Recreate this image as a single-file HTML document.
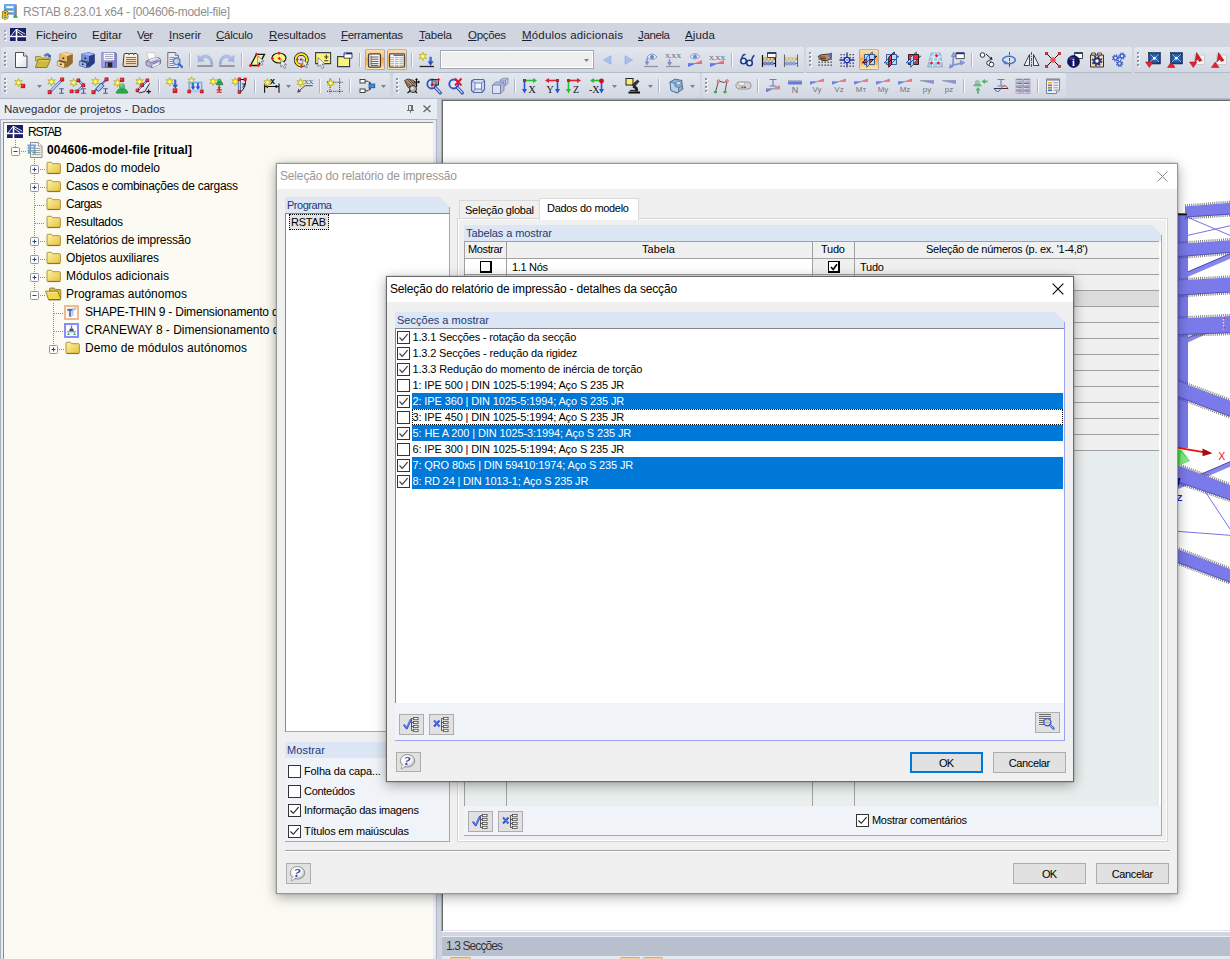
<!DOCTYPE html>
<html lang="pt"><head><meta charset="utf-8"><title>RSTAB 8.23.01 x64 - [004606-model-file]</title>
<style>
html,body{margin:0;padding:0;}
body{width:1230px;height:959px;overflow:hidden;background:#fff;font-family:"Liberation Sans",sans-serif;}
#root{position:relative;width:1230px;height:959px;overflow:hidden;background:#fff;}
.t{position:absolute;white-space:nowrap;font-family:"Liberation Sans",sans-serif;}
.btn{position:absolute;box-sizing:border-box;background:#e1e1e1;border:1px solid #adadad;}
.cb{position:absolute;box-sizing:border-box;width:13px;height:13px;border:1px solid #333;background:#fff;}
svg{position:absolute;overflow:visible;}
u{text-decoration:underline;}

</style></head>
<body>
<div id="root">
<div style="position:absolute;left:0px;top:0px;width:1230px;height:23px;background:#fff;"></div>
<span class="t" style="left:23px;top:4px;font-size:12px;line-height:17px;color:#8e8e8e;letter-spacing:-0.303px;">RSTAB 8.23.01 x64 - [004606-model-file]</span>
<div style="position:absolute;left:0px;top:23px;width:1230px;height:77px;background:#d0d5e0;"></div>
<span class="t" style="left:36px;top:26.500px;font-size:11.500px;line-height:17px;color:#1e1e2e;letter-spacing:0.013px;">Fic<u>h</u>eiro</span>
<span class="t" style="left:92px;top:26.500px;font-size:11.500px;line-height:17px;color:#1e1e2e;letter-spacing:-0.006px;">E<u>d</u>itar</span>
<span class="t" style="left:137px;top:26.500px;font-size:11.500px;line-height:17px;color:#1e1e2e;letter-spacing:-0.625px;">V<u>e</u>r</span>
<span class="t" style="left:169px;top:26.500px;font-size:11.500px;line-height:17px;color:#1e1e2e;letter-spacing:0.010px;"><u>I</u>nserir</span>
<span class="t" style="left:216px;top:26.500px;font-size:11.500px;line-height:17px;color:#1e1e2e;letter-spacing:-0.227px;"><u>C</u>álculo</span>
<span class="t" style="left:269px;top:26.500px;font-size:11.500px;line-height:17px;color:#1e1e2e;letter-spacing:-0.057px;"><u>R</u>esultados</span>
<span class="t" style="left:341px;top:26.500px;font-size:11.500px;line-height:17px;color:#1e1e2e;letter-spacing:-0.316px;"><u>F</u>erramentas</span>
<span class="t" style="left:419px;top:26.500px;font-size:11.500px;line-height:17px;color:#1e1e2e;letter-spacing:-0.175px;"><u>T</u>abela</span>
<span class="t" style="left:468px;top:26.500px;font-size:11.500px;line-height:17px;color:#1e1e2e;letter-spacing:-0.322px;"><u>O</u>pções</span>
<span class="t" style="left:522px;top:26.500px;font-size:11.500px;line-height:17px;color:#1e1e2e;letter-spacing:0.189px;"><u>M</u>ódulos adicionais</span>
<span class="t" style="left:638px;top:26.500px;font-size:11.500px;line-height:17px;color:#1e1e2e;letter-spacing:-0.375px;"><u>J</u>anela</span>
<span class="t" style="left:685px;top:26.500px;font-size:11.500px;line-height:17px;color:#1e1e2e;letter-spacing:0.148px;"><u>A</u>juda</span>
<div style="position:absolute;left:1px;top:47px;width:803px;height:25px;background:linear-gradient(#e3e7ee 0%,#dbe0e9 45%,#d2d7e2 100%);border-radius:3px 2px 1px 1px;box-shadow:0 1px 0 #b4bbc9;"></div>
<div style="position:absolute;left:1px;top:47px;width:8px;height:25px;"><div style="position:absolute;left:3px;top:5px;width:2px;height:2px;background:#8e96a8;box-shadow:1px 1px 0 #fff;"></div><div style="position:absolute;left:3px;top:9px;width:2px;height:2px;background:#8e96a8;box-shadow:1px 1px 0 #fff;"></div><div style="position:absolute;left:3px;top:13px;width:2px;height:2px;background:#8e96a8;box-shadow:1px 1px 0 #fff;"></div><div style="position:absolute;left:3px;top:17px;width:2px;height:2px;background:#8e96a8;box-shadow:1px 1px 0 #fff;"></div></div>
<div style="position:absolute;left:806px;top:47px;width:326px;height:25px;background:linear-gradient(#e3e7ee 0%,#dbe0e9 45%,#d2d7e2 100%);border-radius:3px 2px 1px 1px;box-shadow:0 1px 0 #b4bbc9;"></div>
<div style="position:absolute;left:806px;top:47px;width:8px;height:25px;"><div style="position:absolute;left:3px;top:5px;width:2px;height:2px;background:#8e96a8;box-shadow:1px 1px 0 #fff;"></div><div style="position:absolute;left:3px;top:9px;width:2px;height:2px;background:#8e96a8;box-shadow:1px 1px 0 #fff;"></div><div style="position:absolute;left:3px;top:13px;width:2px;height:2px;background:#8e96a8;box-shadow:1px 1px 0 #fff;"></div><div style="position:absolute;left:3px;top:17px;width:2px;height:2px;background:#8e96a8;box-shadow:1px 1px 0 #fff;"></div></div>
<div style="position:absolute;left:1134px;top:47px;width:100px;height:25px;background:linear-gradient(#e3e7ee 0%,#dbe0e9 45%,#d2d7e2 100%);border-radius:3px 2px 1px 1px;box-shadow:0 1px 0 #b4bbc9;"></div>
<div style="position:absolute;left:1134px;top:47px;width:8px;height:25px;"><div style="position:absolute;left:3px;top:5px;width:2px;height:2px;background:#8e96a8;box-shadow:1px 1px 0 #fff;"></div><div style="position:absolute;left:3px;top:9px;width:2px;height:2px;background:#8e96a8;box-shadow:1px 1px 0 #fff;"></div><div style="position:absolute;left:3px;top:13px;width:2px;height:2px;background:#8e96a8;box-shadow:1px 1px 0 #fff;"></div><div style="position:absolute;left:3px;top:17px;width:2px;height:2px;background:#8e96a8;box-shadow:1px 1px 0 #fff;"></div></div>
<div style="position:absolute;left:1px;top:73px;width:389px;height:25px;background:linear-gradient(#e3e7ee 0%,#dbe0e9 45%,#d2d7e2 100%);border-radius:3px 2px 1px 1px;box-shadow:0 1px 0 #b4bbc9;"></div>
<div style="position:absolute;left:1px;top:73px;width:8px;height:25px;"><div style="position:absolute;left:3px;top:5px;width:2px;height:2px;background:#8e96a8;box-shadow:1px 1px 0 #fff;"></div><div style="position:absolute;left:3px;top:9px;width:2px;height:2px;background:#8e96a8;box-shadow:1px 1px 0 #fff;"></div><div style="position:absolute;left:3px;top:13px;width:2px;height:2px;background:#8e96a8;box-shadow:1px 1px 0 #fff;"></div><div style="position:absolute;left:3px;top:17px;width:2px;height:2px;background:#8e96a8;box-shadow:1px 1px 0 #fff;"></div></div>
<div style="position:absolute;left:393px;top:73px;width:307px;height:25px;background:linear-gradient(#e3e7ee 0%,#dbe0e9 45%,#d2d7e2 100%);border-radius:3px 2px 1px 1px;box-shadow:0 1px 0 #b4bbc9;"></div>
<div style="position:absolute;left:393px;top:73px;width:8px;height:25px;"><div style="position:absolute;left:3px;top:5px;width:2px;height:2px;background:#8e96a8;box-shadow:1px 1px 0 #fff;"></div><div style="position:absolute;left:3px;top:9px;width:2px;height:2px;background:#8e96a8;box-shadow:1px 1px 0 #fff;"></div><div style="position:absolute;left:3px;top:13px;width:2px;height:2px;background:#8e96a8;box-shadow:1px 1px 0 #fff;"></div><div style="position:absolute;left:3px;top:17px;width:2px;height:2px;background:#8e96a8;box-shadow:1px 1px 0 #fff;"></div></div>
<div style="position:absolute;left:702px;top:73px;width:364px;height:25px;background:linear-gradient(#e3e7ee 0%,#dbe0e9 45%,#d2d7e2 100%);border-radius:3px 2px 1px 1px;box-shadow:0 1px 0 #b4bbc9;"></div>
<div style="position:absolute;left:702px;top:73px;width:8px;height:25px;"><div style="position:absolute;left:3px;top:5px;width:2px;height:2px;background:#8e96a8;box-shadow:1px 1px 0 #fff;"></div><div style="position:absolute;left:3px;top:9px;width:2px;height:2px;background:#8e96a8;box-shadow:1px 1px 0 #fff;"></div><div style="position:absolute;left:3px;top:13px;width:2px;height:2px;background:#8e96a8;box-shadow:1px 1px 0 #fff;"></div><div style="position:absolute;left:3px;top:17px;width:2px;height:2px;background:#8e96a8;box-shadow:1px 1px 0 #fff;"></div></div>
<svg style="left:13px;top:52px" width="16" height="16" viewBox="0 0 16 16"><defs><linearGradient id="ng1" x1="0" y1="0" x2="1" y2="1"><stop offset=".3" stop-color="#ffffff"/><stop offset="1" stop-color="#dcdcf0"/></linearGradient></defs><path d="M2.500 .500h8l3.500 3.500v11.500h-11.500z" fill="url(#ng1)" stroke="#4c4c54" stroke-width="1"/><path d="M10.500 .500v3.500h3.500" fill="#f4f4fa" stroke="#4c4c54" stroke-width=".9"/></svg>
<svg style="left:35px;top:52px" width="16" height="16" viewBox="0 0 16 16"><path d="M.500 4.500h5l1 1.500h7.500v3h-13.500z" fill="#d8c450" stroke="#8c7c20" stroke-width=".7"/><path d="M3 7.500h12.500l-3.500 8h-11.500z" fill="#cdb840" stroke="#7c6c18" stroke-width=".8"/><path d="M3.500 8.300h11l-.400 1h-11z" fill="#e8d868" opacity=".8"/><path d="M9 3.500q3.500-4 6.500 0l-1.500 1.500q-2-2.500-4-.500z" fill="#5878d0" stroke="#2c4490" stroke-width=".5"/><path d="M12.500 3.500l3.500-.500l-.500 4z" fill="#3c5cb8"/></svg>
<svg style="left:57px;top:52px" width="16" height="16" viewBox="0 0 16 16"><path d="M2.500 2l7.500-1.500l5.500 1.500v9l-5.500 4.500l-7.500-3z" fill="#e0b060" stroke="#946c30" stroke-width=".5"/><path d="M10 4l5.500-2v9l-5.500 4.500z" fill="#946c30"/><path d="M2.500 2l7.500-1.500l5.500 1.500l-5.500 2z" fill="#f8d48c"/><path d="M2.500 2.300l7.500 1.700v11.500l-7.500-3z" fill="#e8b868"/><ellipse cx="6.300" cy="6.300" rx="1" ry=".8" fill="#111"/><path d="M.300 9l2.500-1l7.200 1.700l-2.500 1.300z" fill="#3c2c10" opacity=".75"/><path d="M.300 9l7.200 2v5l-7.200-2.300z" fill="#f8d48c" stroke="#946c30" stroke-width=".5"/><path d="M7.500 11l2.500-1.300v4.800l-2.500 1.500z" fill="#946c30"/><ellipse cx="3.800" cy="12.300" rx="1" ry=".8" fill="#111"/></svg>
<svg style="left:79px;top:52px" width="16" height="16" viewBox="0 0 16 16"><path d="M2.500 2l7.500-1.500l5.500 1.500v9l-5.500 4.500l-7.500-3z" fill="#6888d8" stroke="#2c3c80" stroke-width=".5"/><path d="M10 4l5.500-2v9l-5.500 4.500z" fill="#2c3c80"/><path d="M2.500 2l7.500-1.500l5.500 1.500l-5.500 2z" fill="#98b4f4"/><path d="M2.500 2.300l7.500 1.700v11.500l-7.500-3z" fill="#7090e0"/><ellipse cx="6.300" cy="6.300" rx="1" ry=".8" fill="#111"/><path d="M.300 9l2.500-1l7.200 1.700l-2.500 1.300z" fill="#3c2c10" opacity=".75"/><path d="M.300 9l7.200 2v5l-7.200-2.300z" fill="#98b4f4" stroke="#2c3c80" stroke-width=".5"/><path d="M7.500 11l2.500-1.300v4.800l-2.500 1.500z" fill="#2c3c80"/><ellipse cx="3.800" cy="12.300" rx="1" ry=".8" fill="#111"/></svg>
<svg style="left:101px;top:52px" width="16" height="16" viewBox="0 0 16 16"><defs><linearGradient id="sg5" x1="0" y1="0" x2="1" y2="0"><stop offset="0" stop-color="#a8a8f4"/><stop offset=".5" stop-color="#8c8ce4"/><stop offset="1" stop-color="#7c7cd4"/></linearGradient></defs><path d="M.800 .500h13.700l1 1v14h-14.700z" fill="url(#sg5)" stroke="#6c6cb8" stroke-width=".7"/><rect x="2.800" y=".800" width="10.400" height="7.400" fill="#f8f8fc"/><path d="M4 2.500h8M4 4.500h8M4 6.500h8" stroke="#a0a0a8" stroke-width=".9"/><rect x="4.300" y="10.300" width="7" height="5" fill="#24242c"/><rect x="5.200" y="10.800" width="1.300" height="4.200" fill="#b8b8ec"/></svg>
<svg style="left:123px;top:52px" width="16" height="16" viewBox="0 0 16 16"><defs><linearGradient id="tg6" x1="0" y1="0" x2="0" y2="1"><stop offset="0" stop-color="#fdf4e4"/><stop offset="1" stop-color="#eccca4"/></linearGradient></defs><path d="M1 2.500q0-1 1-1h3.500v.800h1v-.800h3.500v.800h1v-.800h2q1 .200 1.800 1.200v10.800q0 1-1 1h-12.800q-1 0-1-1z" fill="url(#tg6)" stroke="#3c3c40" stroke-width="1"/><path d="M2.500 2.700h2.500M7 2.700h2.500" stroke="#fff" stroke-width="1"/><path d="M3 5.500h10M3 7.500h10M3 9.500h10M3 11.500h10" stroke="#7c746c" stroke-width="1"/></svg>
<svg style="left:145px;top:52px" width="16" height="16" viewBox="0 0 16 16"><path d="M1.500 .800l7.500-.300l2.500 6.500l-7.500 2z" fill="#fdfcf8" stroke="#b0a8a0" stroke-width=".5"/><path d="M1 9.500l3-2l7.500-2l3 .500l1 2v3.500l-8 4l-6-2.500z" fill="#c8c8e8" stroke="#54546c" stroke-width=".7"/><path d="M4 7.500l7.500-2l2 .800l-8 2.500z" fill="#e8e8f8"/><path d="M7.500 12l8-3.500" stroke="#54546c" stroke-width=".7"/><path d="M6 11l7-2.800" stroke="#7c7cb0" stroke-width="1.200"/><path d="M1 9.500q2.500-1 4 .500q1.500 2 1.500 5.500l-5-2z" fill="#b4b4dc" stroke="#54546c" stroke-width=".5"/><path d="M8 13.500l6-2.800v1.500l-6 3z" fill="#f8f8fc"/></svg>
<svg style="left:167px;top:52px" width="16" height="16" viewBox="0 0 16 16"><path d="M.800 .500h7.500l3 3v12h-10.500z" fill="#ececf0" stroke="#6c6c74" stroke-width="1"/><path d="M8.300 .500v3h3" fill="#dcdce4" stroke="#6c6c74" stroke-width=".8"/><path d="M2.500 5.500h5M2.500 7.500h4M2.500 9.500h3.500M2.500 11.500h4M2.500 13.500h5" stroke="#84848c" stroke-width=".9"/><circle cx="9.700" cy="9.300" r="3.300" fill="#c8ccd4" fill-opacity=".85" stroke="#4888e8" stroke-width="1.300"/><path d="M12.200 12l2.800 3" stroke="#3868d0" stroke-width="2.200" stroke-linecap="round"/></svg>
<div style="position:absolute;left:189px;top:53px;width:1px;height:14px;background:#aeb5c5;"></div>
<div style="position:absolute;left:190px;top:53px;width:1px;height:14px;background:#f8f9fc;"></div>
<svg style="left:197px;top:52px" width="16" height="16" viewBox="0 0 16 16"><defs><linearGradient id="ug9" x1="0" y1="0" x2="0" y2="1"><stop offset="0" stop-color="#b8c8ec"/><stop offset="1" stop-color="#8ca0d0"/></linearGradient><linearGradient id="ul9" x1="0" y1="0" x2="1" y2="0"><stop offset="0" stop-color="#54585c"/><stop offset="1" stop-color="#8c9094"/></linearGradient></defs><path d="M.800 3.200l.300 6.500l6.200-.800l-2-1.800q4-3 7 .500q1.500 2 1.500 4.900h2q0-5.500-3-8q-4.500-3.500-9.500 .500z" fill="url(#ug9)" stroke="#98a8d0" stroke-width=".4"/><path d="M.300 14h15.500" stroke="url(#ul9)" stroke-width="2"/><path d="M.300 14h15.500" stroke="#54585c" stroke-width="2" opacity=".5"/></svg>
<svg style="left:219px;top:52px" width="16" height="16" viewBox="0 0 16 16"><g transform="translate(16,0) scale(-1,1)"><defs><linearGradient id="ug10" x1="0" y1="0" x2="0" y2="1"><stop offset="0" stop-color="#b8c8ec"/><stop offset="1" stop-color="#8ca0d0"/></linearGradient><linearGradient id="ul10" x1="0" y1="0" x2="1" y2="0"><stop offset="0" stop-color="#54585c"/><stop offset="1" stop-color="#8c9094"/></linearGradient></defs><path d="M.800 3.200l.300 6.500l6.200-.800l-2-1.800q4-3 7 .500q1.500 2 1.500 4.900h2q0-5.500-3-8q-4.500-3.500-9.500 .500z" fill="url(#ug10)" stroke="#98a8d0" stroke-width=".4"/><path d="M.300 14h15.500" stroke="url(#ul10)" stroke-width="2"/><path d="M.300 14h15.500" stroke="#54585c" stroke-width="2" opacity=".5"/></g></svg>
<div style="position:absolute;left:241px;top:53px;width:1px;height:14px;background:#aeb5c5;"></div>
<div style="position:absolute;left:242px;top:53px;width:1px;height:14px;background:#f8f9fc;"></div>
<svg style="left:249px;top:52px" width="16" height="16" viewBox="0 0 16 16"><path d="M7.500 2.300h8l-6 11.200h-8z" fill="#f8f480" stroke="#111" stroke-width="1.300"/><path d="M5.8 2.3L7.5 0.5999999999999999L9.2 2.3L7.5 4.0z" fill="#f41424"/><path d="M-0.30000000000000004 13.5L1.4 11.8L3.0999999999999996 13.5L1.4 15.2z" fill="#f41424"/><path d="M7.7 13.5L9.4 11.8L11.1 13.5L9.4 15.2z" fill="#f41424"/><path d="M8.7 3.8l0 8.0l2.0 -1.8l1.6 3.3l1.6 -0.8l-1.6 -3.2l2.6 0z" fill="#f0f0f0" stroke="#555" stroke-width=".6"/></svg>
<svg style="left:271px;top:52px" width="16" height="16" viewBox="0 0 16 16"><ellipse cx="8" cy="6" rx="7" ry="5" fill="#f8f480" stroke="#111" stroke-width="1.100"/><path d="M6.3 1.3L8 -0.3999999999999999L9.7 1.3L8 3.0z" fill="#f41424"/><path d="M-0.19999999999999996 6.4L1.5 4.7L3.2 6.4L1.5 8.1z" fill="#f41424"/><path d="M6.6000000000000005 6.4L8.3 4.7L10.0 6.4L8.3 8.1z" fill="#f41424"/><path d="M9.8 7.5l0 7.6l1.9 -1.71l1.52 3.135l1.52 -0.76l-1.52 -3.04l2.4699999999999998 0z" fill="#f0f0f0" stroke="#555" stroke-width=".6"/></svg>
<svg style="left:294px;top:52px" width="16" height="16" viewBox="0 0 16 16"><circle cx="7.300" cy="7.700" r="5.700" fill="none" stroke="#111" stroke-width="3.400"/><circle cx="7.300" cy="7.700" r="5.700" fill="none" stroke="#f8ec18" stroke-width="2"/><path d="M1.7999999999999998 7.6L3.3 6.1L4.8 7.6L3.3 9.1z" fill="#f41424"/><path d="M5.5 7.6L7 6.1L8.5 7.6L7 9.1z" fill="#f41424"/><path d="M5.6 14.5L7.3 12.8L9.0 14.5L7.3 16.2z" fill="#f41424"/><path d="M8.8 7.5l0 7.2l1.8 -1.62l1.4400000000000002 2.9699999999999998l1.4400000000000002 -0.7200000000000001l-1.4400000000000002 -2.8800000000000003l2.3400000000000003 0z" fill="#f0f0f0" stroke="#555" stroke-width=".6"/></svg>
<svg style="left:315px;top:52px" width="16" height="16" viewBox="0 0 16 16"><path d="M.600 .600h15v11h-15z" fill="#f8f480" stroke="#3c3c44" stroke-width="1.100"/><path d="M9.200 5h4.200M11.300 2.800v4.400M9.200 8.800h4.200" stroke="#3c3c2c" stroke-width="1.100"/><path d="M3 5.6l0 9.2l2.3 -2.07l1.8399999999999999 3.7949999999999995l1.8399999999999999 -0.9199999999999999l-1.8399999999999999 -3.6799999999999997l2.9899999999999998 0z" fill="#f4f4f4" stroke="#555" stroke-width=".6"/></svg>
<svg style="left:337px;top:52px" width="16" height="16" viewBox="0 0 16 16"><path d="M.600 4.600h12v10h-12z" fill="#f8f480" stroke="#3c3c44" stroke-width="1.100"/><path d="M7 1h8v5.200h-8z" fill="#fff" stroke="#3c3c44" stroke-width=".9"/><path d="M7 1.500h8" stroke="#182c88" stroke-width="1.700"/><path d="M7.500 1.300h1.500" stroke="#fff" stroke-width=".8"/></svg>
<div style="position:absolute;left:359px;top:53px;width:1px;height:14px;background:#aeb5c5;"></div>
<div style="position:absolute;left:360px;top:53px;width:1px;height:14px;background:#f8f9fc;"></div>
<div style="position:absolute;left:365px;top:49px;width:20px;height:21px;box-sizing:border-box;border:1px solid #b0a8a0;border-top-color:#d8b078;border-radius:2px;background:linear-gradient(#fbdcae 0%,#fbc377 38%,#f9a636 42%,#fbc368 75%,#fdeab8 100%);"></div>
<div style="position:absolute;left:387px;top:49px;width:20px;height:21px;box-sizing:border-box;border:1px solid #b0a8a0;border-top-color:#d8b078;border-radius:2px;background:linear-gradient(#fbdcae 0%,#fbc377 38%,#f9a636 42%,#fbc368 75%,#fdeab8 100%);"></div>
<svg style="left:366.5px;top:52px" width="16" height="16" viewBox="0 0 16 16"><rect x="1.600" y="1.800" width="11.800" height="13.400" rx="1.200" fill="#fdfdfd" stroke="#4c3c2c" stroke-width="1.300"/><path d="M4 5h7.500M4 7.200h7.500M4 9.400h7.500M4 11.600h7.500M4 13.400h7.500" stroke="#5c5c64" stroke-width="1"/><path d="M4 3.500v10" stroke="#5c5c64" stroke-width="1"/></svg>
<svg style="left:389px;top:52px" width="16" height="16" viewBox="0 0 16 16"><rect x=".600" y="1.800" width="14.800" height="13.400" rx=".8" fill="#fdfdfd" stroke="#5c4830" stroke-width="1.300"/><path d="M4.500 3.300h10" stroke="#4c6cc0" stroke-width="1.500"/><path d="M1.500 5.600h13M1.500 7.600h13M1.500 9.600h13M1.500 11.600h13M1.500 13.600h13" stroke="#b8b8b8" stroke-width="1.100"/><path d="M5.500 4.500v10.500M10 4.500v10.500" stroke="#fdfdfd" stroke-width=".8"/></svg>
<div style="position:absolute;left:411px;top:53px;width:1px;height:14px;background:#aeb5c5;"></div>
<div style="position:absolute;left:412px;top:53px;width:1px;height:14px;background:#f8f9fc;"></div>
<svg style="left:419px;top:52px" width="16" height="16" viewBox="0 0 16 16"><path d="M3.8 0.1 L4.8 2.7 L7.5 2.2 L5.8 4.4 L7.5 6.5 L4.8 6.1 L3.8 8.7 L2.8 6.1 L0.1 6.6 L1.8 4.4 L0.1 2.2 L2.8 2.7z" fill="#f6ee2c" stroke="#9c9414" stroke-width=".55" stroke-linejoin="round"/><circle cx="3.8" cy="4.4" r="1.20" fill="#fffde0" opacity=".85"/><path d="M11.600 4.800v6" stroke="#3c6cd8" stroke-width="2.400"/><path d="M8.600 9.300l3 4.600l3-4.600z" fill="#2c58c0"/><path d="M.600 14.500h14.400" stroke="#23252c" stroke-width="1.300"/></svg>
<div style="position:absolute;left:440px;top:50px;width:154px;height:19px;box-sizing:border-box;border:1px solid #a4a8b4;background:#efefef;box-shadow:inset 0 0 0 1px #fff;"></div>
<svg style="left:583.5px;top:59px" width="5" height="3" viewBox="0 0 5 3"><path d="M0 0h5l-2.500 3z" fill="#7c8088"/></svg>
<svg style="left:599px;top:52px" width="16" height="16" viewBox="0 0 16 16"><path d="M12 3.700v8.600l-7.500-4.300z" fill="#a8c0f0" stroke="#88a4e0" stroke-width=".6"/></svg>
<svg style="left:621px;top:52px" width="16" height="16" viewBox="0 0 16 16"><path d="M4 3.700v8.600l7.500-4.300z" fill="#a8c0f0" stroke="#88a4e0" stroke-width=".6"/></svg>
<svg style="left:643px;top:52px" width="16" height="16" viewBox="0 0 16 16"><path d="M4 5q5-6 10 0q-5 5-10 0z" fill="#e8eefc" stroke="#7c90c4" stroke-width=".9"/><circle cx="9" cy="5" r="2" fill="#6c88d0"/><path d="M4 6v6" stroke="#7c90c4" stroke-width="1.500"/><path d="M1.500 9.500l2.500 4l2.500-4z" fill="#7c90c4"/><path d="M1 14.500h14" stroke="#8c94a8" stroke-width="1.200"/></svg>
<svg style="left:665px;top:52px" width="16" height="16" viewBox="0 0 16 16"><text x="8" y="5.5" text-anchor="middle" font-family="Liberation Serif,serif" font-size="7" fill="#5c6070" letter-spacing="-.2">X.XX</text><path d="M4.500 7v5" stroke="#7c90c4" stroke-width="1.400"/><path d="M2 10l2.500 4l2.500-4z" fill="#7c90c4"/><path d="M1 14.500h14" stroke="#8c94a8" stroke-width="1.200"/></svg>
<svg style="left:687px;top:52px" width="16" height="16" viewBox="0 0 16 16"><path d="M3 4.5q5-6 10 0q-5 5-10 0z" fill="#e8eefc" stroke="#7c90c4" stroke-width=".9"/><circle cx="8" cy="4.5" r="2" fill="#6c88d0"/><path d="M1 11.5h14" stroke="#8a8a98" stroke-width="1"/><path d="M8 11.0L15 11.0L15 8.0z" fill="#ee7480"/><path d="M8 12.0L1 12.0L1 15.0z" fill="#6474e8"/></svg>
<svg style="left:709px;top:52px" width="16" height="16" viewBox="0 0 16 16"><text x="8" y="7.5" text-anchor="middle" font-family="Liberation Serif,serif" font-size="7" fill="#5c6070" letter-spacing="-.2">X.XX</text><path d="M1 11.5h14" stroke="#8a8a98" stroke-width="1"/><path d="M8 11.0L15 11.0L15 8.0z" fill="#ee7480"/><path d="M8 12.0L1 12.0L1 15.0z" fill="#6474e8"/></svg>
<div style="position:absolute;left:731px;top:53px;width:1px;height:14px;background:#aeb5c5;"></div>
<div style="position:absolute;left:732px;top:53px;width:1px;height:14px;background:#f8f9fc;"></div>
<svg style="left:739px;top:52px" width="16" height="16" viewBox="0 0 16 16"><circle cx="4.500" cy="9" r="2.800" fill="#e4ecfc" stroke="#203c8c" stroke-width="1.600"/><circle cx="10.500" cy="11" r="2.800" fill="#e4ecfc" stroke="#203c8c" stroke-width="1.600"/><path d="M7 9.500q1-.8 1.500.5M2.500 7q1-5 4-4.500M12.500 9q1-5 3-5.500" fill="none" stroke="#203c8c" stroke-width="1.400"/></svg>
<svg style="left:761px;top:52px" width="16" height="16" viewBox="0 0 16 16"><g opacity="1.0"><path d="M1.500 3v12M14.500 3v12M1.500 7h13M1.500 11.500h13" stroke="#111" stroke-width="1.200" fill="none"/><circle cx="4" cy="7" r="1.700" fill="#e8d470" stroke="#8c7c20" stroke-width=".4"/><circle cx="7.5" cy="7" r="1.700" fill="#e8d470" stroke="#8c7c20" stroke-width=".4"/><circle cx="11" cy="7" r="1.700" fill="#e8d470" stroke="#8c7c20" stroke-width=".4"/><circle cx="4" cy="11.500" r="1.700" fill="#7c94ec" stroke="#2c3c90" stroke-width=".4"/><circle cx="7.5" cy="11.500" r="1.700" fill="#7c94ec" stroke="#2c3c90" stroke-width=".4"/><circle cx="11" cy="11.500" r="1.700" fill="#7c94ec" stroke="#2c3c90" stroke-width=".4"/></g><path d="M6.500 .500h8.500v5h-8.500z" fill="#fff" stroke="#333" stroke-width=".9"/><path d="M6.500 1.200h8.500" stroke="#203890" stroke-width="1.500"/></svg>
<svg style="left:783px;top:52px" width="16" height="16" viewBox="0 0 16 16"><g opacity=".9"><path d="M1.500 2.500v12.500M14.500 2.500v12.500M1.500 7h13M1.500 11.500h13" stroke="#5c5c64" stroke-width="1.100" fill="none"/><circle cx="4" cy="7" r="1.700" fill="#e8dc90" stroke="#a89c50" stroke-width=".4"/><circle cx="7.5" cy="7" r="1.700" fill="#e8dc90" stroke="#a89c50" stroke-width=".4"/><circle cx="11" cy="7" r="1.700" fill="#e8dc90" stroke="#a89c50" stroke-width=".4"/><circle cx="4" cy="11.500" r="1.700" fill="#90a4f0" stroke="#5064b0" stroke-width=".4"/><circle cx="7.5" cy="11.500" r="1.700" fill="#90a4f0" stroke="#5064b0" stroke-width=".4"/><circle cx="11" cy="11.500" r="1.700" fill="#90a4f0" stroke="#5064b0" stroke-width=".4"/></g></svg>
<div style="position:absolute;left:859px;top:49px;width:20px;height:21px;box-sizing:border-box;border:1px solid #b0a8a0;border-top-color:#d8b078;border-radius:2px;background:linear-gradient(#fbdcae 0%,#fbc377 38%,#f9a636 42%,#fbc368 75%,#fdeab8 100%);"></div>
<svg style="left:817px;top:52px" width="16" height="16" viewBox="0 0 16 16"><rect x="1.5" y="6.5" width="1.300" height="1.300" fill="#333"/><rect x="1.5" y="9.5" width="1.300" height="1.300" fill="#333"/><rect x="1.5" y="12.5" width="1.300" height="1.300" fill="#333"/><rect x="4.5" y="6.5" width="1.300" height="1.300" fill="#333"/><rect x="4.5" y="9.5" width="1.300" height="1.300" fill="#333"/><rect x="4.5" y="12.5" width="1.300" height="1.300" fill="#333"/><rect x="7.5" y="6.5" width="1.300" height="1.300" fill="#333"/><rect x="7.5" y="9.5" width="1.300" height="1.300" fill="#333"/><rect x="7.5" y="12.5" width="1.300" height="1.300" fill="#333"/><rect x="10.5" y="6.5" width="1.300" height="1.300" fill="#333"/><rect x="10.5" y="9.5" width="1.300" height="1.300" fill="#333"/><rect x="10.5" y="12.5" width="1.300" height="1.300" fill="#333"/><rect x="13.5" y="6.5" width="1.300" height="1.300" fill="#333"/><rect x="13.5" y="9.5" width="1.300" height="1.300" fill="#333"/><rect x="13.5" y="12.5" width="1.300" height="1.300" fill="#333"/><path d="M1 4.500q3-2.500 6-2l5-.500l2 1v3.500l-4 2q-4 .5-5.500-.5l-1.500-1.500z" fill="#b88c68" stroke="#2c1c10" stroke-width=".8"/><path d="M12 1.500l3-1v5l-2 1z" fill="#4468c8"/><path d="M2.500 5h6M3 6.500h6M4 8h4" stroke="#3c2818" stroke-width=".7"/></svg>
<svg style="left:839px;top:52px" width="16" height="16" viewBox="0 0 16 16"><rect x="1.5" y="2" width="1.300" height="1.300" fill="#333"/><rect x="1.5" y="5" width="1.300" height="1.300" fill="#333"/><rect x="1.5" y="10.5" width="1.300" height="1.300" fill="#333"/><rect x="1.5" y="13.5" width="1.300" height="1.300" fill="#333"/><rect x="4.5" y="2" width="1.300" height="1.300" fill="#333"/><rect x="4.5" y="5" width="1.300" height="1.300" fill="#333"/><rect x="4.5" y="10.5" width="1.300" height="1.300" fill="#333"/><rect x="4.5" y="13.5" width="1.300" height="1.300" fill="#333"/><rect x="10.5" y="2" width="1.300" height="1.300" fill="#333"/><rect x="10.5" y="5" width="1.300" height="1.300" fill="#333"/><rect x="10.5" y="10.5" width="1.300" height="1.300" fill="#333"/><rect x="10.5" y="13.5" width="1.300" height="1.300" fill="#333"/><rect x="13.5" y="2" width="1.300" height="1.300" fill="#333"/><rect x="13.5" y="5" width="1.300" height="1.300" fill="#333"/><rect x="13.5" y="10.5" width="1.300" height="1.300" fill="#333"/><rect x="13.5" y="13.5" width="1.300" height="1.300" fill="#333"/><path d="M8 .500v15M.500 8h15" stroke="#1828b8" stroke-width="1.300"/><circle cx="8" cy="8" r="2.600" fill="#fff" stroke="#1828b8" stroke-width="1.300"/><circle cx="8" cy="8" r=".8" fill="#1828b8"/></svg>
<svg style="left:861px;top:52px" width="16" height="16" viewBox="0 0 16 16"><path d="M8.5 7.5L11.3 4.7L11.3 9.7L8.5 12.5z" fill="#b4d8f8" stroke="#1c4c9c" stroke-width=".85" stroke-linejoin="round"/><path d="M8.5 7.5L12.5 7.5L15.8 4.2L11.8 4.2z" fill="#f42c34" stroke="#180808" stroke-width=".85" stroke-linejoin="round"/><path d="M4.5 7.5L8.5 7.5L11.8 4.2L7.8 4.2z" fill="#f42c34" stroke="#180808" stroke-width=".85" stroke-linejoin="round"/><path d="M8.5 7.5L11.3 4.7L11.3 0L8.5 2.5z" fill="#b4d8f8" stroke="#1c4c9c" stroke-width=".85" stroke-linejoin="round"/><path d="M8.5 7.5L13.5 7.5L13.5 2.5L8.5 2.5z" fill="#b4d8f8" stroke="#1c4c9c" stroke-width=".85" stroke-linejoin="round"/><path d="M3.5 7.5L8.5 7.5L8.5 2.5L3.5 2.5z" fill="#b4d8f8" stroke="#1c4c9c" stroke-width=".85" stroke-linejoin="round"/><path d="M3.5 7.5L8.5 7.5L8.5 12.5L3.5 12.5z" fill="#b4d8f8" stroke="#1c4c9c" stroke-width=".85" stroke-linejoin="round"/><path d="M8.5 7.5L13.5 7.5L13.5 12.5L8.5 12.5z" fill="#b4d8f8" stroke="#1c4c9c" stroke-width=".85" stroke-linejoin="round"/><path d="M8.5 7.5L12.5 7.5L9.2 10.8L5.2 10.8z" fill="#f42c34" stroke="#180808" stroke-width=".85" stroke-linejoin="round"/><path d="M8.5 7.5L5.7 10.3L5.7 15.3L8.5 12.5z" fill="#b4d8f8" stroke="#1c4c9c" stroke-width=".85" stroke-linejoin="round"/><path d="M4.5 7.5L8.5 7.5L5.2 10.8L1.2 10.8z" fill="#f42c34" stroke="#180808" stroke-width=".85" stroke-linejoin="round"/><path d="M8.5 7.5L5.7 10.3L5.7 5.3L8.5 2.5z" fill="#b4d8f8" stroke="#1c4c9c" stroke-width=".85" stroke-linejoin="round"/></svg>
<svg style="left:883px;top:52px" width="16" height="16" viewBox="0 0 16 16"><path d="M8.5 7.5L11.3 4.7L11.3 9.7L8.5 12.5z" fill="#f42c34" stroke="#180808" stroke-width=".85" stroke-linejoin="round"/><path d="M8.5 7.5L12.5 7.5L15.8 4.2L11.8 4.2z" fill="#b4d8f8" stroke="#1c4c9c" stroke-width=".85" stroke-linejoin="round"/><path d="M4.5 7.5L8.5 7.5L11.8 4.2L7.8 4.2z" fill="#b4d8f8" stroke="#1c4c9c" stroke-width=".85" stroke-linejoin="round"/><path d="M8.5 7.5L11.3 4.7L11.3 0L8.5 2.5z" fill="#f42c34" stroke="#180808" stroke-width=".85" stroke-linejoin="round"/><path d="M8.5 7.5L13.5 7.5L13.5 2.5L8.5 2.5z" fill="#b4d8f8" stroke="#1c4c9c" stroke-width=".85" stroke-linejoin="round"/><path d="M3.5 7.5L8.5 7.5L8.5 2.5L3.5 2.5z" fill="#b4d8f8" stroke="#1c4c9c" stroke-width=".85" stroke-linejoin="round"/><path d="M3.5 7.5L8.5 7.5L8.5 12.5L3.5 12.5z" fill="#b4d8f8" stroke="#1c4c9c" stroke-width=".85" stroke-linejoin="round"/><path d="M8.5 7.5L13.5 7.5L13.5 12.5L8.5 12.5z" fill="#b4d8f8" stroke="#1c4c9c" stroke-width=".85" stroke-linejoin="round"/><path d="M8.5 7.5L12.5 7.5L9.2 10.8L5.2 10.8z" fill="#b4d8f8" stroke="#1c4c9c" stroke-width=".85" stroke-linejoin="round"/><path d="M8.5 7.5L5.7 10.3L5.7 15.3L8.5 12.5z" fill="#f42c34" stroke="#180808" stroke-width=".85" stroke-linejoin="round"/><path d="M4.5 7.5L8.5 7.5L5.2 10.8L1.2 10.8z" fill="#b4d8f8" stroke="#1c4c9c" stroke-width=".85" stroke-linejoin="round"/><path d="M8.5 7.5L5.7 10.3L5.7 5.3L8.5 2.5z" fill="#f42c34" stroke="#180808" stroke-width=".85" stroke-linejoin="round"/></svg>
<svg style="left:905px;top:52px" width="16" height="16" viewBox="0 0 16 16"><path d="M8.5 7.5L11.3 4.7L11.3 9.7L8.5 12.5z" fill="#b4d8f8" stroke="#1c4c9c" stroke-width=".85" stroke-linejoin="round"/><path d="M8.5 7.5L12.5 7.5L15.8 4.2L11.8 4.2z" fill="#b4d8f8" stroke="#1c4c9c" stroke-width=".85" stroke-linejoin="round"/><path d="M4.5 7.5L8.5 7.5L11.8 4.2L7.8 4.2z" fill="#b4d8f8" stroke="#1c4c9c" stroke-width=".85" stroke-linejoin="round"/><path d="M8.5 7.5L11.3 4.7L11.3 0L8.5 2.5z" fill="#b4d8f8" stroke="#1c4c9c" stroke-width=".85" stroke-linejoin="round"/><path d="M8.5 7.5L13.5 7.5L13.5 2.5L8.5 2.5z" fill="#f42c34" stroke="#180808" stroke-width=".85" stroke-linejoin="round"/><path d="M3.5 7.5L8.5 7.5L8.5 2.5L3.5 2.5z" fill="#f42c34" stroke="#180808" stroke-width=".85" stroke-linejoin="round"/><path d="M3.5 7.5L8.5 7.5L8.5 12.5L3.5 12.5z" fill="#f42c34" stroke="#180808" stroke-width=".85" stroke-linejoin="round"/><path d="M8.5 7.5L13.5 7.5L13.5 12.5L8.5 12.5z" fill="#f42c34" stroke="#180808" stroke-width=".85" stroke-linejoin="round"/><path d="M8.5 7.5L12.5 7.5L9.2 10.8L5.2 10.8z" fill="#b4d8f8" stroke="#1c4c9c" stroke-width=".85" stroke-linejoin="round"/><path d="M8.5 7.5L5.7 10.3L5.7 15.3L8.5 12.5z" fill="#b4d8f8" stroke="#1c4c9c" stroke-width=".85" stroke-linejoin="round"/><path d="M4.5 7.5L8.5 7.5L5.2 10.8L1.2 10.8z" fill="#b4d8f8" stroke="#1c4c9c" stroke-width=".85" stroke-linejoin="round"/><path d="M8.5 7.5L5.7 10.3L5.7 5.3L8.5 2.5z" fill="#b4d8f8" stroke="#1c4c9c" stroke-width=".85" stroke-linejoin="round"/></svg>
<svg style="left:927px;top:52px" width="16" height="16" viewBox="0 0 16 16"><path d="M4 1h9.500l2 14h-15z" fill="#a4d0ec" stroke="#7c98b0" stroke-width=".6"/><path d="M3.200 5h11M2 9.500h13M7.200 1l-1.700 14M10.500 1l.700 14" stroke="#e8f4fc" stroke-width=".9"/><path d="M7.8 3.7L9.6 1.9000000000000001L11.4 3.7L9.6 5.5z" fill="#f41424"/><path d="M2.7 11L4.5 9.2L6.3 11L4.5 12.8z" fill="#f41424"/><path d="M9.5 11L11.3 9.2L13.100000000000001 11L11.3 12.8z" fill="#f41424"/></svg>
<svg style="left:949px;top:52px" width="16" height="16" viewBox="0 0 16 16"><path d="M3.800 13.200l.800-10M3.800 13.200l9-2M3.800 13.200l-2.300 1.800" fill="none" stroke="#7c98d4" stroke-width="1.800"/><path d="M4.700 0l-2.500 4.500h4.500zM15.800 10.500l-4.500-2l.800 4.500zM.300 16l1-3.500l2.500 2.500z" fill="#8ca8e0" stroke="#4c68a8" stroke-width=".5"/><path d="M7 .800h8.300v5.800h-8.300z" fill="#fff" stroke="#3c3c44" stroke-width=".9"/><path d="M7 1.400h8.300" stroke="#182c88" stroke-width="1.600"/></svg>
<div style="position:absolute;left:971px;top:53px;width:1px;height:14px;background:#aeb5c5;"></div>
<div style="position:absolute;left:972px;top:53px;width:1px;height:14px;background:#f8f9fc;"></div>
<svg style="left:979px;top:52px" width="16" height="16" viewBox="0 0 16 16"><circle cx="3.500" cy="3" r="2.300" fill="#fff" stroke="#222" stroke-width=".9"/><circle cx="10" cy="11" r="2.300" fill="#fff" stroke="#222" stroke-width=".9"/><circle cx="12.500" cy="12.500" r="2.300" fill="#fff" stroke="#222" stroke-width=".9"/><path d="M7 2l5.500 5" stroke="#222" stroke-width="1"/><path d="M13.500 8l-3.500-.800l2.800-2.400z" fill="#222"/></svg>
<svg style="left:1001px;top:52px" width="16" height="16" viewBox="0 0 16 16"><ellipse cx="8" cy="8" rx="6.300" ry="3.800" fill="none" stroke="#4878d0" stroke-width="1.600"/><path d="M3 12.500l.500-4l3.500 2.500z" fill="#4878d0"/><path d="M8.500 0v16" stroke="#ee1020" stroke-width="1" stroke-dasharray="3 1 1 1"/></svg>
<svg style="left:1023px;top:52px" width="16" height="16" viewBox="0 0 16 16"><path d="M6.500 2.500v11h-5.500zM10.500 2.500v11h5.500z" fill="#f0f0f4" stroke="#2c2c34" stroke-width=".9"/><path d="M8.500 0v16" stroke="#ee1020" stroke-width="1" stroke-dasharray="3 1 1 1"/></svg>
<svg style="left:1045px;top:52px" width="16" height="16" viewBox="0 0 16 16"><path d="M1.500 1.500l13 13M14.500 1.500l-13 13" stroke="#111" stroke-width="1"/><circle cx="8" cy="8" r="2.200" fill="#f8b0b4" stroke="#e01020" stroke-width=".9"/><circle cx="8" cy="8" r=".9" fill="#e01020"/><rect x="0.40000000000000013" y="0.40000000000000013" width="2.4" height="2.4" fill="#ec1420" stroke="#98080c" stroke-width=".5"/><rect x="0.8000000000000002" y="0.8000000000000002" width="1.08" height="1.08" fill="#ff6868" opacity=".7"/><rect x="13.200000000000001" y="0.40000000000000013" width="2.4" height="2.4" fill="#ec1420" stroke="#98080c" stroke-width=".5"/><rect x="13.600000000000001" y="0.8000000000000002" width="1.08" height="1.08" fill="#ff6868" opacity=".7"/><rect x="0.40000000000000013" y="13.200000000000001" width="2.4" height="2.4" fill="#ec1420" stroke="#98080c" stroke-width=".5"/><rect x="0.8000000000000002" y="13.600000000000001" width="1.08" height="1.08" fill="#ff6868" opacity=".7"/><rect x="13.200000000000001" y="13.200000000000001" width="2.4" height="2.4" fill="#ec1420" stroke="#98080c" stroke-width=".5"/><rect x="13.600000000000001" y="13.600000000000001" width="1.08" height="1.08" fill="#ff6868" opacity=".7"/></svg>
<svg style="left:1067px;top:52px" width="16" height="16" viewBox="0 0 16 16"><path d="M7.500 .500h8v6h-8z" fill="#fff" stroke="#333" stroke-width=".9"/><path d="M7.500 1.200h8" stroke="#203890" stroke-width="1.500"/><circle cx="6.500" cy="9.500" r="6" fill="#101460" stroke="#000030" stroke-width=".6"/><ellipse cx="5" cy="6.500" rx="3" ry="1.800" fill="#5058b0" opacity=".6"/><text x="6.500" y="13.500" text-anchor="middle" font-family="Liberation Serif,serif" font-weight="bold" font-size="10" fill="#fff">i</text></svg>
<svg style="left:1089px;top:52px" width="16" height="16" viewBox="0 0 16 16"><path d="M1.500 3h13v12h-13z" fill="#f0d8b8" stroke="#3c342c" stroke-width="1"/><path d="M2.500 1h4v2h-4zM8.500 1h4v2h-4z" fill="#f0d8b8" stroke="#3c342c" stroke-width=".8"/><circle cx="8" cy="9" r="4.3" fill="none" stroke="#24347c" stroke-width="2" stroke-dasharray="1.7 1.7"/><circle cx="8" cy="9" r="2.8" fill="none" stroke="#24347c" stroke-width="2"/><circle cx="8" cy="9" r="1.200" fill="#f8f8ff"/></svg>
<svg style="left:1111px;top:52px" width="16" height="16" viewBox="0 0 16 16"><circle cx="4.5" cy="6" r="2.9" fill="none" stroke="#4060c8" stroke-width="1.6" stroke-dasharray="1.15 1.15"/><circle cx="4.5" cy="6" r="1.9" fill="none" stroke="#4060c8" stroke-width="1.3"/><circle cx="11" cy="4" r="2.9" fill="none" stroke="#4060c8" stroke-width="1.6" stroke-dasharray="1.15 1.15"/><circle cx="11" cy="4" r="1.9" fill="none" stroke="#4060c8" stroke-width="1.3"/><circle cx="8.5" cy="11.5" r="2.9" fill="none" stroke="#4060c8" stroke-width="1.6" stroke-dasharray="1.15 1.15"/><circle cx="8.5" cy="11.5" r="1.9" fill="none" stroke="#4060c8" stroke-width="1.3"/></svg>
<svg style="left:1145px;top:52px" width="16" height="16" viewBox="0 0 16 16"><defs><radialGradient id="dxg42" cx=".5" cy=".5" r=".7"><stop offset="0" stop-color="#3c84c8"/><stop offset="1" stop-color="#082870"/></radialGradient></defs><rect x="3.500" y=".500" width="12" height="11.500" fill="url(#dxg42)" stroke="#04184c" stroke-width=".5"/><path d="M5 2l4 4l-4 4M14 2l-4 4l4 4" fill="none" stroke="#9cc8f0" stroke-width="1" opacity=".9"/><rect x="8" y="5" width="2.500" height="2.500" fill="#fff"/><path d="M.500 10h7.500l-3.750 5.500z" fill="#e82030" stroke="#a01018" stroke-width=".5"/></svg>
<svg style="left:1167px;top:52px" width="16" height="16" viewBox="0 0 16 16"><defs><radialGradient id="dxg43" cx=".5" cy=".5" r=".7"><stop offset="0" stop-color="#3c84c8"/><stop offset="1" stop-color="#082870"/></radialGradient></defs><rect x="3.500" y=".500" width="12" height="11.500" fill="url(#dxg43)" stroke="#04184c" stroke-width=".5"/><path d="M5 2l4 4l-4 4M14 2l-4 4l4 4" fill="none" stroke="#9cc8f0" stroke-width="1" opacity=".9"/><rect x="8" y="5" width="2.500" height="2.500" fill="#fff"/><path d="M.500 15.500h7.500l-3.750-5.500z" fill="#e82030" stroke="#a01018" stroke-width=".5"/></svg>
<svg style="left:1189px;top:52px" width="16" height="16" viewBox="0 0 16 16"><rect x="5.500" y="3" width="10" height="9.500" fill="#f4f4f4" stroke="#c0c0c8" stroke-width=".7"/><path d="M7.500 .500l5.500 8l-3 1l-1-2.500l-3 3z" fill="#d81828" stroke="#8c0c14" stroke-width=".5"/><path d="M.500 10h7.500l-3.750 5.500z" fill="#e82030" stroke="#a01018" stroke-width=".5"/></svg>
<svg style="left:1211px;top:52px" width="16" height="16" viewBox="0 0 16 16"><rect x="5.500" y="3" width="10" height="9.500" fill="#f4f4f4" stroke="#c0c0c8" stroke-width=".7"/><path d="M7.500 .500l5.500 8l-3 1l-1-2.500l-3 3z" fill="#d81828" stroke="#8c0c14" stroke-width=".5"/><path d="M.500 15.500h7.500l-3.750-5.500z" fill="#e82030" stroke="#a01018" stroke-width=".5"/></svg>
<svg style="left:13px;top:78px" width="16" height="16" viewBox="0 0 16 16"><path d="M5.6 0.3 L6.6 2.9 L9.3 2.4 L7.6 4.6 L9.3 6.7 L6.6 6.3 L5.6 8.9 L4.6 6.3 L1.9 6.8 L3.6 4.6 L1.9 2.4 L4.6 2.9z" fill="#f6ee2c" stroke="#9c9414" stroke-width=".55" stroke-linejoin="round"/><circle cx="5.6" cy="4.6" r="1.20" fill="#fffde0" opacity=".85"/><rect x="8.1" y="6.1" width="3.8" height="3.8" fill="#ec1420" stroke="#98080c" stroke-width=".5"/><rect x="8.5" y="6.5" width="1.71" height="1.71" fill="#ff6868" opacity=".7"/></svg>
<svg style="left:37.0px;top:85px" width="5" height="3" viewBox="0 0 5 3"><path d="M0 0h5l-2.500 3z" fill="#7c8088"/></svg>
<svg style="left:48px;top:78px" width="16" height="16" viewBox="0 0 16 16"><path d="M1.500 14.300L14.300 1.500" fill="none" stroke="#3c5cac" stroke-width="2.6"/><path d="M1.500 14.300L14.300 1.500" fill="none" stroke="#c0dcf8" stroke-width="1.4000000000000001"/><path d="M3.5 -0.4 L4.5 2.2 L7.2 1.7 L5.5 3.9 L7.2 6.0 L4.5 5.6 L3.5 8.2 L2.5 5.6 L-0.2 6.1 L1.5 3.9 L-0.2 1.7 L2.5 2.2z" fill="#f6ee2c" stroke="#9c9414" stroke-width=".55" stroke-linejoin="round"/><circle cx="3.5" cy="3.9" r="1.20" fill="#fffde0" opacity=".85"/><rect x="12.700000000000001" y="-0.10000000000000009" width="3.2" height="3.2" fill="#ec1420" stroke="#98080c" stroke-width=".5"/><rect x="13.100000000000001" y="0.29999999999999993" width="1.44" height="1.44" fill="#ff6868" opacity=".7"/><rect x="0.0" y="12.700000000000001" width="3.2" height="3.2" fill="#ec1420" stroke="#98080c" stroke-width=".5"/><rect x="0.4" y="13.100000000000001" width="1.44" height="1.44" fill="#ff6868" opacity=".7"/><path d="M11.2 10.7h4.600M11.2 15.3h4.600M13.5 10.7v4.600" stroke="#4c5c9c" stroke-width="1.100" fill="none"/></svg>
<svg style="left:70px;top:78px" width="16" height="16" viewBox="0 0 16 16"><path d="M1.500 13.400h6l6-6l-5-5" fill="none" stroke="#3c5cac" stroke-width="2.4"/><path d="M1.500 13.400h6l6-6l-5-5" fill="none" stroke="#c0dcf8" stroke-width="1.2"/><path d="M3.6 0.3 L4.6 2.9 L7.3 2.4 L5.6 4.6 L7.3 6.7 L4.6 6.3 L3.6 8.9 L2.6 6.3 L-0.1 6.8 L1.6 4.6 L-0.1 2.4 L2.6 2.9z" fill="#f6ee2c" stroke="#9c9414" stroke-width=".55" stroke-linejoin="round"/><circle cx="3.6" cy="4.6" r="1.20" fill="#fffde0" opacity=".85"/><rect x="6.9" y="0.8999999999999999" width="3" height="3" fill="#ec1420" stroke="#98080c" stroke-width=".5"/><rect x="7.300000000000001" y="1.2999999999999998" width="1.35" height="1.35" fill="#ff6868" opacity=".7"/><rect x="11.9" y="5.8" width="3" height="3" fill="#ec1420" stroke="#98080c" stroke-width=".5"/><rect x="12.3" y="6.2" width="1.35" height="1.35" fill="#ff6868" opacity=".7"/><rect x="5.8" y="11.9" width="3" height="3" fill="#ec1420" stroke="#98080c" stroke-width=".5"/><rect x="6.2" y="12.3" width="1.35" height="1.35" fill="#ff6868" opacity=".7"/><rect x="0.0" y="11.9" width="3" height="3" fill="#ec1420" stroke="#98080c" stroke-width=".5"/><rect x="0.4" y="12.3" width="1.35" height="1.35" fill="#ff6868" opacity=".7"/><path d="M11.2 10.7h4.600M11.2 15.3h4.600M13.5 10.7v4.600" stroke="#4c5c9c" stroke-width="1.100" fill="none"/></svg>
<svg style="left:92px;top:78px" width="16" height="16" viewBox="0 0 16 16"><path d="M1.500 14.300L14.300 1.500" fill="none" stroke="#3c5cac" stroke-width="1.8"/><path d="M1.500 14.300L14.300 1.500" fill="none" stroke="#c0dcf8" stroke-width="0.6000000000000001"/><path d="M3.800 10.800l5.200-5.800l3 2.700l-5.200 5.800z" fill="#a4ccf8" stroke="#22324c" stroke-width=".8"/><path d="M3.5 -0.6 L4.5 2.0 L7.2 1.5 L5.5 3.7 L7.2 5.8 L4.5 5.4 L3.5 8.0 L2.5 5.4 L-0.2 5.9 L1.5 3.7 L-0.2 1.5 L2.5 2.0z" fill="#f6ee2c" stroke="#9c9414" stroke-width=".55" stroke-linejoin="round"/><circle cx="3.5" cy="3.7" r="1.20" fill="#fffde0" opacity=".85"/><rect x="12.9" y="-0.20000000000000018" width="3.2" height="3.2" fill="#ec1420" stroke="#98080c" stroke-width=".5"/><rect x="13.3" y="0.19999999999999984" width="1.44" height="1.44" fill="#ff6868" opacity=".7"/><rect x="-0.10000000000000009" y="12.700000000000001" width="3.2" height="3.2" fill="#ec1420" stroke="#98080c" stroke-width=".5"/><rect x="0.29999999999999993" y="13.100000000000001" width="1.44" height="1.44" fill="#ff6868" opacity=".7"/><path d="M11.2 10.7h4.600M11.2 15.3h4.600M13.5 10.7v4.600" stroke="#4c5c9c" stroke-width="1.100" fill="none"/></svg>
<svg style="left:114px;top:78px" width="16" height="16" viewBox="0 0 16 16"><path d="M2 14.200q0 1 1 1h10q1 0 1-1l-2.500-3.200h-7z" fill="#30a850" stroke="#187030" stroke-width=".5"/><path d="M4.500 11l1-1h5l1 1z" fill="#58cc78"/><circle cx="8" cy="8.400" r="2.600" fill="#48c868" stroke="#208840" stroke-width=".5"/><ellipse cx="7.300" cy="7" rx="1.300" ry="1" fill="#a0f0b8" opacity=".7"/><path d="M3.4 0.5 L4.4 3.1 L7.1 2.6 L5.4 4.8 L7.1 6.9 L4.4 6.5 L3.4 9.1 L2.4 6.5 L-0.3 7.0 L1.4 4.8 L-0.3 2.6 L2.4 3.1z" fill="#f6ee2c" stroke="#9c9414" stroke-width=".55" stroke-linejoin="round"/><circle cx="3.4" cy="4.8" r="1.20" fill="#fffde0" opacity=".85"/><rect x="6.1" y="0.0" width="3.8" height="3.8" fill="#ec1420" stroke="#98080c" stroke-width=".5"/><rect x="6.5" y="0.4" width="1.71" height="1.71" fill="#ff6868" opacity=".7"/></svg>
<svg style="left:136px;top:78px" width="16" height="16" viewBox="0 0 16 16"><path d="M3 15l6-1.500l4.500-8" fill="none" stroke="#222" stroke-width=".9"/><path d="M2.500 13.700L12.500 4" stroke="#fff" stroke-width="1.600"/><path d="M1.500 12.500L11.400 2.500" fill="none" stroke="#3c5cac" stroke-width="2.2"/><path d="M1.500 12.500L11.400 2.500" fill="none" stroke="#c0dcf8" stroke-width="1.0000000000000002"/><path d="M3.6 -0.6 L4.6 2.0 L7.3 1.5 L5.6 3.7 L7.3 5.8 L4.6 5.4 L3.6 8.0 L2.6 5.4 L-0.1 5.9 L1.6 3.7 L-0.1 1.5 L2.6 2.0z" fill="#f6ee2c" stroke="#9c9414" stroke-width=".55" stroke-linejoin="round"/><circle cx="3.6" cy="3.7" r="1.20" fill="#fffde0" opacity=".85"/><rect x="9.9" y="0.8999999999999999" width="3" height="3" fill="#ec1420" stroke="#98080c" stroke-width=".5"/><rect x="10.3" y="1.2999999999999998" width="1.35" height="1.35" fill="#ff6868" opacity=".7"/><rect x="4.8" y="5.8" width="3" height="3" fill="#ec1420" stroke="#98080c" stroke-width=".5"/><rect x="5.2" y="6.2" width="1.35" height="1.35" fill="#ff6868" opacity=".7"/><rect x="0.0" y="11.0" width="3" height="3" fill="#ec1420" stroke="#98080c" stroke-width=".5"/><rect x="0.4" y="11.4" width="1.35" height="1.35" fill="#ff6868" opacity=".7"/><path d="M12.700 11.500v4.200M10.600 13.600h4.200" stroke="#111" stroke-width="1.100"/></svg>
<div style="position:absolute;left:158px;top:79px;width:1px;height:14px;background:#aeb5c5;"></div>
<div style="position:absolute;left:159px;top:79px;width:1px;height:14px;background:#f8f9fc;"></div>
<svg style="left:164px;top:78px" width="16" height="16" viewBox="0 0 16 16"><path d="M5.7 -0.6 L6.7 2.0 L9.4 1.5 L7.7 3.7 L9.4 5.8 L6.7 5.4 L5.7 8.0 L4.7 5.4 L2.0 5.9 L3.7 3.7 L2.0 1.5 L4.7 2.0z" fill="#f6ee2c" stroke="#9c9414" stroke-width=".55" stroke-linejoin="round"/><circle cx="5.7" cy="3.7" r="1.20" fill="#fffde0" opacity=".85"/><path d="M11.200 1.500v6.500" stroke="#3c6cd8" stroke-width="2.200"/><path d="M8.400 6.800l2.800 3.900l2.800-3.900z" fill="#2c58c0"/><rect x="9.0" y="10.8" width="4" height="4" fill="#ec1420" stroke="#98080c" stroke-width=".5"/><rect x="9.4" y="11.200000000000001" width="1.80" height="1.80" fill="#ff6868" opacity=".7"/></svg>
<svg style="left:187px;top:78px" width="16" height="16" viewBox="0 0 16 16"><path d="M4.5 -1.3 L5.5 1.2 L8.0 0.8 L6.4 2.8 L8.0 4.8 L5.5 4.4 L4.5 6.9 L3.6 4.4 L1.0 4.8 L2.6 2.8 L1.0 0.8 L3.5 1.2z" fill="#f6ee2c" stroke="#9c9414" stroke-width=".55" stroke-linejoin="round"/><circle cx="4.5" cy="2.8" r="1.14" fill="#fffde0" opacity=".85"/><path d="M2.300 13v-8.500h12.400v8.500" fill="none" stroke="#78acec" stroke-width="1.500"/><path d="M2.300 13.300h12.400" stroke="#a8ccf4" stroke-width="2.200"/><path d="M6 5v4.500M11 5v4.500" stroke="#2454c8" stroke-width="1.600"/><path d="M3.800 8.500l2.200 3.500l2.200-3.500zM8.800 8.500l2.200 3.500l2.200-3.500z" fill="#2454c8"/><rect x="0.7999999999999998" y="12.0" width="3" height="3" fill="#ec1420" stroke="#98080c" stroke-width=".5"/><rect x="1.1999999999999997" y="12.4" width="1.35" height="1.35" fill="#ff6868" opacity=".7"/><rect x="13.2" y="12.0" width="3" height="3" fill="#ec1420" stroke="#98080c" stroke-width=".5"/><rect x="13.6" y="12.4" width="1.35" height="1.35" fill="#ff6868" opacity=".7"/></svg>
<svg style="left:209px;top:78px" width="16" height="16" viewBox="0 0 16 16"><path d="M7 6.800q.5-3.500 3.500-3.800q3 .3 3.500 3.800z" fill="#2ca04c" stroke="#146028" stroke-width=".5"/><ellipse cx="10.300" cy="2.300" rx="1.800" ry="1.300" fill="#48d070" stroke="#146028" stroke-width=".4"/><path d="M10.200 6.800v8M7.700 11.900h5M7.700 14.300h5" stroke="#dc1424" stroke-width="1.100"/><path d="M8.500 9l1.700 2.500l1.700-2.500z" fill="#dc1424"/><path d="M4.2 -0.5 L5.2 2.0 L7.7 1.6 L6.1 3.6 L7.7 5.6 L5.2 5.2 L4.2 7.7 L3.3 5.2 L0.7 5.6 L2.3 3.6 L0.7 1.6 L3.2 2.0z" fill="#f6ee2c" stroke="#9c9414" stroke-width=".55" stroke-linejoin="round"/><circle cx="4.2" cy="3.6" r="1.14" fill="#fffde0" opacity=".85"/></svg>
<svg style="left:231px;top:78px" width="16" height="16" viewBox="0 0 16 16"><path d="M8.400 1.500v12.500" stroke="#2c4c9c" stroke-width="3"/><path d="M8.400 1.500v12.500" stroke="#acd0f8" stroke-width="1.600"/><path d="M9.500 1.500h4.700q1.500 7-4.500 12.500" fill="none" stroke="#111" stroke-width="1"/><path d="M11 6l3 0l-2.500 3.500" fill="none" stroke="#111" stroke-width=".9"/><path d="M4.3 -0.5 L5.2 2.0 L7.8 1.6 L6.2 3.6 L7.8 5.6 L5.2 5.2 L4.3 7.7 L3.4 5.2 L0.8 5.6 L2.4 3.6 L0.8 1.6 L3.3 2.0z" fill="#f6ee2c" stroke="#9c9414" stroke-width=".55" stroke-linejoin="round"/><circle cx="4.3" cy="3.6" r="1.14" fill="#fffde0" opacity=".85"/><rect x="7.0" y="-0.09999999999999987" width="2.8" height="2.8" fill="#ec1420" stroke="#98080c" stroke-width=".5"/><rect x="7.4" y="0.30000000000000016" width="1.26" height="1.26" fill="#ff6868" opacity=".7"/><rect x="12.899999999999999" y="0.0" width="2.6" height="2.6" fill="#ec1420" stroke="#98080c" stroke-width=".5"/><rect x="13.299999999999999" y="0.4" width="1.17" height="1.17" fill="#ff6868" opacity=".7"/><rect x="7.0" y="12.799999999999999" width="2.8" height="2.8" fill="#ec1420" stroke="#98080c" stroke-width=".5"/><rect x="7.4" y="13.2" width="1.26" height="1.26" fill="#ff6868" opacity=".7"/></svg>
<div style="position:absolute;left:254px;top:79px;width:1px;height:14px;background:#aeb5c5;"></div>
<div style="position:absolute;left:255px;top:79px;width:1px;height:14px;background:#f8f9fc;"></div>
<svg style="left:264px;top:78px" width="16" height="16" viewBox="0 0 16 16"><path d="M.600 5.400v9.400M15 5.400v9.400M.600 8.500h14.400" stroke="#111" stroke-width="1.100"/><path d="M.800 8.500l3.200-1.800v3.600zM14.800 8.500l-3.200-1.800v3.600z" fill="#111"/><text x="8.400" y="6.300" text-anchor="middle" font-family="Liberation Sans,sans-serif" font-size="9" font-weight="bold" fill="#111">x</text><path d="M3.4 0.5 L4.3 3.0 L6.9 2.6 L5.3 4.6 L6.9 6.6 L4.3 6.2 L3.4 8.7 L2.5 6.2 L-0.1 6.6 L1.5 4.6 L-0.1 2.6 L2.4 3.0z" fill="#f6ee2c" stroke="#9c9414" stroke-width=".55" stroke-linejoin="round"/><circle cx="3.4" cy="4.6" r="1.14" fill="#fffde0" opacity=".85"/></svg>
<svg style="left:286.0px;top:85px" width="5" height="3" viewBox="0 0 5 3"><path d="M0 0h5l-2.500 3z" fill="#7c8088"/></svg>
<svg style="left:297px;top:78px" width="16" height="16" viewBox="0 0 16 16"><path d="M1.500 13.500l6.500-5.800h7.700" fill="none" stroke="#4c4c54" stroke-width="1"/><path d="M.200 14.800l1-4l3 2.800z" fill="#4c4c54"/><text x="11.600" y="5.800" text-anchor="middle" font-family="Liberation Serif,serif" font-size="7" fill="#505460" letter-spacing="-.2">XX</text><path d="M3.5 0.5 L4.5 3.0 L7.0 2.6 L5.4 4.6 L7.0 6.6 L4.5 6.2 L3.5 8.7 L2.6 6.2 L-0.0 6.6 L1.6 4.6 L-0.0 2.6 L2.5 3.0z" fill="#f6ee2c" stroke="#9c9414" stroke-width=".55" stroke-linejoin="round"/><circle cx="3.5" cy="4.6" r="1.14" fill="#fffde0" opacity=".85"/></svg>
<div style="position:absolute;left:319px;top:79px;width:1px;height:14px;background:#aeb5c5;"></div>
<div style="position:absolute;left:320px;top:79px;width:1px;height:14px;background:#f8f9fc;"></div>
<svg style="left:327px;top:78px" width="16" height="16" viewBox="0 0 16 16"><path d="M0 4.300h16M0 13.300h16M3 .500v15M12.600 .500v15" stroke="#222" stroke-width="1" stroke-dasharray="1 1.100"/><path d="M3.7 0.9 L4.7 3.4 L7.2 3.0 L5.6 5.0 L7.2 7.0 L4.7 6.6 L3.7 9.1 L2.8 6.6 L0.2 7.0 L1.8 5.0 L0.2 3.0 L2.7 3.4z" fill="#f6ee2c" stroke="#9c9414" stroke-width=".55" stroke-linejoin="round"/><circle cx="3.7" cy="5" r="1.14" fill="#fffde0" opacity=".85"/></svg>
<div style="position:absolute;left:349px;top:79px;width:1px;height:14px;background:#aeb5c5;"></div>
<div style="position:absolute;left:350px;top:79px;width:1px;height:14px;background:#f8f9fc;"></div>
<svg style="left:358.5px;top:78px" width="16" height="16" viewBox="0 0 16 16"><rect x="1" y="1.500" width="5" height="3.500" fill="#fff" stroke="#333" stroke-width=".9"/><rect x="1" y="11" width="5" height="3.500" fill="#fff" stroke="#333" stroke-width=".9"/><rect x="10" y="6" width="5.800" height="3.800" fill="#3c8ce0" stroke="#0c4ca0" stroke-width=".7"/><path d="M6 3.200h3l2.500 2.500M6 12.800h3l2.500-2.500" fill="none" stroke="#333" stroke-width=".9"/><path d="M9.500 5.500l2.500.500l-.800-2.600zM9.500 10.500l2.500-.500l-.800 2.600z" fill="#333"/></svg>
<svg style="left:381.0px;top:85px" width="5" height="3" viewBox="0 0 5 3"><path d="M0 0h5l-2.500 3z" fill="#7c8088"/></svg>
<svg style="left:404px;top:78px" width="16" height="16" viewBox="0 0 16 16"><path d="M.500 2.500l3.500-1.500l6 1.500l1.500 3l-2.500 5l-5-1z" fill="#b89878" stroke="#3c2c20" stroke-width=".8"/><path d="M1.500 3l6 5.500M3.500 1.800l6 5.500M1.500 5l5 4.500M6 2l4 4" stroke="#4c3828" stroke-width=".8"/><circle cx="9" cy="11" r="3.600" fill="#a8a8a8" stroke="#333" stroke-width=".9"/><circle cx="8.300" cy="10.300" r="1.500" fill="#e0e0e0"/><path d="M12.500 1v8M9.500 4h6M3.500 15l3-2.500M13 15l-2-2" stroke="#111" stroke-width="1.200"/><path d="M12.500 0l-1.500 2h3zM16 4l-2-1.500v3z" fill="#111"/></svg>
<svg style="left:426px;top:78px" width="16" height="16" viewBox="0 0 16 16"><circle cx="5.800" cy="6" r="4.500" fill="#e8f0fc" fill-opacity=".6" stroke="#3058c0" stroke-width="1.900"/><path d="M9.300 9.500l5 5.300" stroke="#2444a4" stroke-width="3.200" stroke-linecap="round"/><path d="M9.600 9.800l4.500 4.800" stroke="#b8d0f8" stroke-width="1.400" stroke-linecap="round"/><rect x="6" y="1.500" width="6.500" height="5.500" fill="#8c8c94" fill-opacity=".7" stroke="#222" stroke-width=".9"/><path d="M12.500 0v3.400M10.800 1.700h3.400M4.300 7h3.400M6 5.300v3.400" stroke="#e01020" stroke-width="1.100"/></svg>
<svg style="left:448px;top:78px" width="16" height="16" viewBox="0 0 16 16"><circle cx="5.800" cy="6" r="4.500" fill="#e8f0fc" fill-opacity=".6" stroke="#3058c0" stroke-width="1.900"/><path d="M9.300 9.500l5 5.300" stroke="#2444a4" stroke-width="3.200" stroke-linecap="round"/><path d="M9.600 9.800l4.500 4.800" stroke="#b8d0f8" stroke-width="1.400" stroke-linecap="round"/><path d="M7 .500l6.500 7M13.500 .500l-6.500 7" stroke="#e01828" stroke-width="2"/></svg>
<svg style="left:470px;top:78px" width="16" height="16" viewBox="0 0 16 16"><path d="M1.500 3l2.500-1.500h9.500l1 1.500v8.500l-2.500 3h-8.500l-2-2z" fill="#d0dcf4" stroke="#5468a8" stroke-width="1.200"/><path d="M5 5h6.500v6h-6.500z" fill="#f0f4fc" stroke="#6878b0" stroke-width=".9"/><path d="M1.500 3l3.500 2M14.500 3l-3 2M11.500 11l1 3.500M5 11l-1.500 3" stroke="#6878b0" stroke-width=".9"/></svg>
<svg style="left:492px;top:78px" width="16" height="16" viewBox="0 0 16 16"><path d="M8 2.200l3-2h5v5l-2.500 2.500h-5.500z" fill="#c4cce4" stroke="#7480b0" stroke-width=".7"/><path d="M8 2.200h5.500v5.500M13.500 2.200l2.500-2" fill="none" stroke="#7480b0" stroke-width=".7"/><path d="M.500 7l3.500-3h8v8.500l-3.500 3z" fill="#b4bcd8" stroke="#6c78a8" stroke-width=".7"/><path d="M.500 7h8v8.500h-8z" fill="#dce2f2" stroke="#6c78a8" stroke-width=".9"/><path d="M8.500 7l3.500-3" stroke="#6c78a8" stroke-width=".7"/><path d="M12 9l4-4" stroke="#8c98c0" stroke-width=".6"/></svg>
<div style="position:absolute;left:514px;top:79px;width:1px;height:14px;background:#aeb5c5;"></div>
<div style="position:absolute;left:515px;top:79px;width:1px;height:14px;background:#f8f9fc;"></div>
<svg style="left:522px;top:78px" width="16" height="16" viewBox="0 0 16 16"><path d="M2.500 2.500h10" stroke="#20c030" stroke-width="1.600"/><path d="M11 0l4 2.500l-4 2.500z" fill="#20c030"/><path d="M2.500 2v10" stroke="#2850e0" stroke-width="1.600"/><path d="M0 11l2.500 4.500l2.500-4.500z" fill="#2850e0"/><path d="M1 1h3v3h-3z" fill="#c02020"/><text x="6.5" y="14.500" font-family="Liberation Serif,serif" font-size="10" fill="#111">X</text></svg>
<svg style="left:544px;top:78px" width="16" height="16" viewBox="0 0 16 16"><path d="M3 2.500h10" stroke="#e02030" stroke-width="1.600"/><path d="M5 0l-4 2.500l4 2.500z" fill="#e02030"/><path d="M13.500 2v10" stroke="#2850e0" stroke-width="1.600"/><path d="M11 11l2.500 4.500l2.500-4.500z" fill="#2850e0"/><path d="M12 1h3v3h-3z" fill="#c02020"/><text x="2.5" y="14.500" font-family="Liberation Serif,serif" font-size="10" fill="#111">Y</text></svg>
<svg style="left:566px;top:78px" width="16" height="16" viewBox="0 0 16 16"><path d="M2.500 2.500h10" stroke="#e02030" stroke-width="1.600"/><path d="M11 0l4 2.500l-4 2.500z" fill="#e02030"/><path d="M2.500 2v10" stroke="#20c030" stroke-width="1.600"/><path d="M0 11l2.500 4.500l2.500-4.500z" fill="#20c030"/><path d="M1 1h3v3h-3z" fill="#c02020"/><text x="7" y="14.500" font-family="Liberation Serif,serif" font-size="10" fill="#111">Z</text></svg>
<svg style="left:589px;top:78px" width="16" height="16" viewBox="0 0 16 16"><path d="M3 2.500h9" stroke="#20c030" stroke-width="1.600"/><path d="M5 0l-4 2.500l4 2.500z" fill="#20c030"/><path d="M12.500 3v9" stroke="#2850e0" stroke-width="1.600"/><path d="M10 11l2.500 4.500l2.500-4.500z" fill="#2850e0"/><circle cx="12.500" cy="3" r="2.400" fill="#d01020"/><text x="0" y="14.500" font-family="Liberation Serif,serif" font-size="10" fill="#111">-X</text></svg>
<svg style="left:611.5px;top:85px" width="5" height="3" viewBox="0 0 5 3"><path d="M0 0h5l-2.500 3z" fill="#7c8088"/></svg>
<svg style="left:625px;top:78px" width="16" height="16" viewBox="0 0 16 16"><rect x="1" y=".500" width="7" height="6.500" fill="#f8f068" stroke="#222" stroke-width="1"/><path d="M6.500 7l6-5.500l2 2l-5.500 6z" fill="#333"/><path d="M9 7.500q5 1 4 6h-3q1-3-2.500-4z" fill="#222"/><path d="M3.500 14.500h11.500" stroke="#111" stroke-width="2"/><path d="M5 12.500h5" stroke="#333" stroke-width="1.400"/></svg>
<svg style="left:647.5px;top:85px" width="5" height="3" viewBox="0 0 5 3"><path d="M0 0h5l-2.500 3z" fill="#7c8088"/></svg>
<div style="position:absolute;left:658px;top:79px;width:1px;height:14px;background:#aeb5c5;"></div>
<div style="position:absolute;left:659px;top:79px;width:1px;height:14px;background:#f8f9fc;"></div>
<svg style="left:668px;top:78px" width="16" height="16" viewBox="0 0 16 16"><path d="M2 4l5-3l7 1.500v4.500l1 4l-6 4l-6-2.500z" fill="#8cb0d4" stroke="#3c5c84" stroke-width=".8"/><path d="M2 4l5 1.500v3l3.500 1v5.500l-7.500-2.500z" fill="#b8d4ec" stroke="#3c5c84" stroke-width=".6"/><path d="M7 5.500l3.500-2l3.500 1l-3.500 2.500z" fill="#d8e8f8" stroke="#3c5c84" stroke-width=".5"/><path d="M10.500 10l4.500-3" stroke="#3c5c84" stroke-width=".6"/></svg>
<svg style="left:689.5px;top:85px" width="5" height="3" viewBox="0 0 5 3"><path d="M0 0h5l-2.500 3z" fill="#7c8088"/></svg>
<svg style="left:713px;top:78px" width="16" height="16" viewBox="0 0 16 16"><path d="M2.500 14L5.500 3L11 4.500L14 3L12 14" fill="none" stroke="#555" stroke-width="1"/><circle cx="5.500" cy="3" r="1.300" fill="#f8c0c0" stroke="#d04050" stroke-width=".7"/><circle cx="14" cy="3" r="1.300" fill="#f8c0c0" stroke="#d04050" stroke-width=".7"/><rect x="1" y="13" width="3" height="2.200" fill="#30b048"/><rect x="10.500" y="13" width="3" height="2.200" fill="#30b048"/></svg>
<svg style="left:735px;top:78px" width="16" height="16" viewBox="0 0 16 16"><path d="M1 6.500l2-2.500h10q3 0 3 3v1q0 3-3 3h-10l-2-2z" fill="#d4d4d8" stroke="#88888c" stroke-width=".8"/><rect x="3.500" y="4.500" width="6" height="2.500" fill="#f8f8f8" stroke="#999" stroke-width=".5"/><rect x="4" y="8.500" width="2" height="1.500" fill="#e8c020"/><rect x="6.500" y="8.500" width="2" height="1.500" fill="#d83040"/><rect x="9" y="8.500" width="2" height="1.500" fill="#3858d0"/></svg>
<div style="position:absolute;left:757px;top:79px;width:1px;height:14px;background:#aeb5c5;"></div>
<div style="position:absolute;left:758px;top:79px;width:1px;height:14px;background:#f8f9fc;"></div>
<svg style="left:765px;top:78px" width="16" height="16" viewBox="0 0 16 16"><path d="M4.500 1.500h7M4.500 8h7M8 1.500v6.500" stroke="#6c7cc0" stroke-width="1.100" fill="none"/><path d="M1 10.8h14" stroke="#8a8a98" stroke-width="1"/><path d="M8 10.3L15 10.3L15 7.300000000000001z" fill="#ee7480"/><path d="M8 11.3L1 11.3L1 14.3z" fill="#6474e8"/></svg>
<svg style="left:787px;top:78px" width="16" height="16" viewBox="0 0 16 16"><path d="M1 3h14" stroke="#8088a8" stroke-width="1"/><path d="M1 3.500h14v3h-14z" fill="#6878e0"/><text x="8" y="14.500" text-anchor="middle" font-family="Liberation Sans,sans-serif" font-size="9" fill="#6c7078">N</text></svg>
<svg style="left:809px;top:78px" width="16" height="16" viewBox="0 0 16 16"><path d="M1 3.500h14" stroke="#9aa0b8" stroke-width="1"/><path d="M8 3L15 3L15 .500z" fill="#e87884"/><path d="M8 4L1 4L1 6.800z" fill="#7080e8"/><text x="8" y="13.800" text-anchor="middle" font-family="Liberation Sans,sans-serif" font-size="8" fill="#72767e">Vy</text></svg>
<svg style="left:831px;top:78px" width="16" height="16" viewBox="0 0 16 16"><path d="M1 3.500h14" stroke="#9aa0b8" stroke-width="1"/><path d="M8 3L15 3L15 .500z" fill="#e87884"/><path d="M8 4L1 4L1 6.800z" fill="#7080e8"/><text x="8" y="13.800" text-anchor="middle" font-family="Liberation Sans,sans-serif" font-size="8" fill="#72767e">Vz</text></svg>
<svg style="left:853px;top:78px" width="16" height="16" viewBox="0 0 16 16"><path d="M1 3.500h14" stroke="#9aa0b8" stroke-width="1"/><path d="M8 3L15 3L15 .500z" fill="#e87884"/><path d="M8 4L1 4L1 6.800z" fill="#7080e8"/><text x="8" y="13.800" text-anchor="middle" font-family="Liberation Sans,sans-serif" font-size="8" fill="#72767e">Mт</text></svg>
<svg style="left:875px;top:78px" width="16" height="16" viewBox="0 0 16 16"><path d="M1 3.500h14" stroke="#9aa0b8" stroke-width="1"/><path d="M8 3L15 3L15 .500z" fill="#e87884"/><path d="M8 4L1 4L1 6.800z" fill="#7080e8"/><text x="8" y="13.800" text-anchor="middle" font-family="Liberation Sans,sans-serif" font-size="8" fill="#72767e">My</text></svg>
<svg style="left:897px;top:78px" width="16" height="16" viewBox="0 0 16 16"><path d="M1 3.500h14" stroke="#9aa0b8" stroke-width="1"/><path d="M8 3L15 3L15 .500z" fill="#e87884"/><path d="M8 4L1 4L1 6.800z" fill="#7080e8"/><text x="8" y="13.800" text-anchor="middle" font-family="Liberation Sans,sans-serif" font-size="8" fill="#72767e">Mz</text></svg>
<svg style="left:919px;top:78px" width="16" height="16" viewBox="0 0 16 16"><path d="M1 2.500h14" stroke="#9aa0b8" stroke-width="1"/><path d="M1 3L15 3L15 6z" fill="#7080e8" opacity=".8"/><text x="8" y="14" text-anchor="middle" font-family="Liberation Sans,sans-serif" font-size="8" fill="#72767e">py</text></svg>
<svg style="left:941px;top:78px" width="16" height="16" viewBox="0 0 16 16"><path d="M1 2.500h14" stroke="#9aa0b8" stroke-width="1"/><path d="M1 3L15 3L15 6z" fill="#7080e8" opacity=".8"/><text x="8" y="14" text-anchor="middle" font-family="Liberation Sans,sans-serif" font-size="8" fill="#72767e">pz</text></svg>
<div style="position:absolute;left:963px;top:79px;width:1px;height:14px;background:#aeb5c5;"></div>
<div style="position:absolute;left:964px;top:79px;width:1px;height:14px;background:#f8f9fc;"></div>
<svg style="left:972px;top:78px" width="16" height="16" viewBox="0 0 16 16"><path d="M1.500 8h8l-1.500-2h-5z" fill="#7cc08c" stroke="#58986c" stroke-width=".5"/><circle cx="5.500" cy="4.500" r="2" fill="#98d4a8" stroke="#58986c" stroke-width=".5"/><path d="M15.500 3.500h-3" stroke="#4cb464" stroke-width="1.800"/><path d="M13 1l-3.500 2.500l3.500 2.500z" fill="#4cb464"/><path d="M6 15.500v-3" stroke="#4cb464" stroke-width="1.800"/><path d="M3.500 12.500l2.500-3.500l2.500 3.500z" fill="#4cb464"/></svg>
<svg style="left:993px;top:78px" width="16" height="16" viewBox="0 0 16 16"><path d="M4.500 1.500h7M4.500 8h7M8 1.500v6.500" stroke="#6c7cc0" stroke-width="1.100" fill="none"/><path d="M1 10.500h14" stroke="#333" stroke-width="1"/><path d="M1 10.500q3.500 6 7 0" fill="none" stroke="#4858e0" stroke-width="1"/><path d="M8 10.500q3.500-6 7 0" fill="none" stroke="#e03848" stroke-width="1"/></svg>
<svg style="left:1015px;top:78px" width="16" height="16" viewBox="0 0 16 16"><rect x="1" y="1" width="6.500" height="3" fill="#e4e8f4" stroke="#8890a8" stroke-width=".6"/><path d="M1.5 1.7h5.500" stroke="#5878d0" stroke-width="1"/><path d="M3 3.3h4" stroke="#e08090" stroke-width=".7"/><rect x="1" y="4.8" width="6.500" height="3" fill="#e4e8f4" stroke="#8890a8" stroke-width=".6"/><path d="M1.5 5.5h5.500" stroke="#5878d0" stroke-width="1"/><path d="M3 7.1h4" stroke="#e08090" stroke-width=".7"/><rect x="1" y="8.6" width="6.500" height="3" fill="#e4e8f4" stroke="#8890a8" stroke-width=".6"/><path d="M1.5 9.299999999999999h5.500" stroke="#5878d0" stroke-width="1"/><path d="M3 10.899999999999999h4" stroke="#e08090" stroke-width=".7"/><rect x="1" y="12.4" width="6.500" height="3" fill="#e4e8f4" stroke="#8890a8" stroke-width=".6"/><path d="M1.5 13.1h5.500" stroke="#5878d0" stroke-width="1"/><path d="M3 14.7h4" stroke="#e08090" stroke-width=".7"/><rect x="8.5" y="1" width="6.500" height="3" fill="#e4e8f4" stroke="#8890a8" stroke-width=".6"/><path d="M9.0 1.7h5.500" stroke="#5878d0" stroke-width="1"/><path d="M10.5 3.3h4" stroke="#e08090" stroke-width=".7"/><rect x="8.5" y="4.8" width="6.500" height="3" fill="#e4e8f4" stroke="#8890a8" stroke-width=".6"/><path d="M9.0 5.5h5.500" stroke="#5878d0" stroke-width="1"/><path d="M10.5 7.1h4" stroke="#e08090" stroke-width=".7"/><rect x="8.5" y="8.6" width="6.500" height="3" fill="#e4e8f4" stroke="#8890a8" stroke-width=".6"/><path d="M9.0 9.299999999999999h5.500" stroke="#5878d0" stroke-width="1"/><path d="M10.5 10.899999999999999h4" stroke="#e08090" stroke-width=".7"/><rect x="8.5" y="12.4" width="6.500" height="3" fill="#e4e8f4" stroke="#8890a8" stroke-width=".6"/><path d="M9.0 13.1h5.500" stroke="#5878d0" stroke-width="1"/><path d="M10.5 14.7h4" stroke="#e08090" stroke-width=".7"/></svg>
<div style="position:absolute;left:1037px;top:79px;width:1px;height:14px;background:#aeb5c5;"></div>
<div style="position:absolute;left:1038px;top:79px;width:1px;height:14px;background:#f8f9fc;"></div>
<svg style="left:1045px;top:78px" width="16" height="16" viewBox="0 0 16 16"><path d="M1.500 1h13v11l-3 3.500h-10z" fill="#f0f0f4" stroke="#80808c" stroke-width="1"/><path d="M1.500 1.800h13" stroke="#7c8cc4" stroke-width="1.600"/><path d="M11.500 15.500v-3.500h3" fill="#d0d0d8" stroke="#80808c" stroke-width=".7"/><rect x="3" y="4" width="4" height="1.600" fill="#e8c020"/><rect x="3" y="6.500" width="4" height="1.600" fill="#e04858"/><rect x="3" y="9" width="4" height="1.600" fill="#48b060"/><rect x="3" y="11.500" width="4" height="1.600" fill="#4868d8"/><path d="M8.500 4.800h4.500M8.500 7.300h4.500M8.500 9.800h4.500M8.500 12.300h2.500" stroke="#888" stroke-width=".8"/></svg>
<svg style="left:2px;top:3px" width="17" height="17" viewBox="0 0 17 17"><rect x="2" y="1" width="2.200" height="9" fill="#5c9ce0"/><rect x="11.500" y="1" width="2.400" height="13" fill="#5c9ce0"/><path d="M14.200 1.500v12.500" stroke="#5c4c3c" stroke-width=".8"/><rect x="2" y="1" width="11.900" height="2.200" fill="#6cacec"/><rect x="4" y="5.200" width="7.500" height="1.800" fill="#5c9ce0"/><rect x="4" y="9.200" width="7.500" height="1.800" fill="#5c9ce0"/><path d="M4 7.300h7.500M4 11.300h7.500" stroke="#6c5c4c" stroke-width=".6"/><path d="M11 14.800h5l-2.500-3z" fill="#2c9c3c"/><text x="0" y="15.800" font-family="Liberation Sans,sans-serif" font-size="11" font-weight="bold" fill="#f0d828" stroke="#3c3004" stroke-width="1.100" paint-order="stroke">8</text></svg>
<svg style="left:10px;top:28px" width="16" height="13" viewBox="0 0 16 13"><rect width="16" height="13" fill="#1b1f6b"/><path d="M0 8.500h16" stroke="#fff" stroke-width="1.4"/><path d="M6.500 1v12" stroke="#fff" stroke-width="1.6"/><path d="M6 1.500L1 8M7 1.500l8 4.500M7 3.500l6 4" stroke="#fff" stroke-width=".9" fill="none"/></svg>
<div style="position:absolute;left:3px;top:30px;width:8px;height:12px;"><div style="position:absolute;left:1px;top:0px;width:2px;height:2px;background:#a4aaba;box-shadow:1px 1px 0 #fff;"></div><div style="position:absolute;left:1px;top:4px;width:2px;height:2px;background:#a4aaba;box-shadow:1px 1px 0 #fff;"></div><div style="position:absolute;left:1px;top:8px;width:2px;height:2px;background:#a4aaba;box-shadow:1px 1px 0 #fff;"></div></div>
<div style="position:absolute;left:0px;top:99px;width:437px;height:860px;background:#e8ecf5;"></div>
<div style="position:absolute;left:0px;top:119px;width:437px;height:1px;background:#b2b7c4;"></div>
<div style="position:absolute;left:0px;top:120px;width:1px;height:839px;background:#a8aebb;"></div>
<div style="position:absolute;left:436px;top:120px;width:1px;height:839px;background:#b0b6c4;"></div>
<span class="t" style="left:4px;top:101px;font-size:11.5px;line-height:17px;color:#2c2c3c;letter-spacing:0.046px;">Navegador de projetos - Dados</span>
<div style="position:absolute;left:3px;top:122px;width:430px;height:837px;background:#fbfbf4;border-top:1px solid #8c8c8c;border-left:1px solid #8c8c8c;box-sizing:border-box;"></div>
<div style="position:absolute;left:437px;top:99px;width:5px;height:860px;background:#cdd2dc;"></div>
<div style="position:absolute;left:441px;top:99px;width:789px;height:1px;background:#a4a8b0;"></div>
<div style="position:absolute;left:441px;top:100px;width:1px;height:831px;background:#a4a8b0;"></div>
<div style="position:absolute;left:442px;top:100px;width:788px;height:1px;background:#6c6c6c;"></div>
<div style="position:absolute;left:442px;top:100px;width:1px;height:831px;background:#6c6c6c;"></div>
<div style="position:absolute;left:0px;top:98px;width:1230px;height:1px;background:#b4bac6;"></div>
<div style="position:absolute;left:443px;top:101px;width:787px;height:829px;background:#fff;"></div>
<div style="position:absolute;left:443px;top:930px;width:787px;height:1px;background:#e4e4e8;"></div>
<div style="position:absolute;left:443px;top:931px;width:787px;height:1px;background:#fff;"></div>
<div style="position:absolute;left:441px;top:932px;width:789px;height:27px;background:#d0d5e0;"></div>
<div style="position:absolute;left:442px;top:936px;width:788px;height:1px;background:#e8ecf4;"></div>
<div style="position:absolute;left:442px;top:937px;width:788px;height:19px;background:#b9c0cd;"></div>
<span class="t" style="left:446px;top:938px;font-size:12px;line-height:16px;color:#33333b;letter-spacing:-0.902px;">1.3 Secções</span>
<div style="position:absolute;left:442px;top:956px;width:788px;height:3px;background:#e4e8f0;"></div>
<div style="position:absolute;left:450px;top:957px;width:21px;height:3px;background:#f4cfa0;border:1px solid #d8a878;border-bottom:none;border-radius:2px 2px 0 0;box-sizing:border-box;"></div>
<div style="position:absolute;left:620px;top:957px;width:20px;height:3px;background:#f4cfa0;border:1px solid #d8a878;border-bottom:none;border-radius:2px 2px 0 0;box-sizing:border-box;"></div>
<div style="position:absolute;left:643px;top:957px;width:20px;height:3px;background:#f4cfa0;border:1px solid #d8a878;border-bottom:none;border-radius:2px 2px 0 0;box-sizing:border-box;"></div>
<svg style="left:405px;top:103px" width="30" height="12" viewBox="0 0 30 12"><path d="M3.500 2.500h4v5h-4zM6.500 2.500v5M2 7.500h7M5.500 7.500v2.300" fill="none" stroke="#6a6a6a" stroke-width="1"/><path d="M6 2.500h1.500v5h-1.500z" fill="#6a6a6a"/><path d="M18.500 2.500l7 6.500M25.500 2.500l-7 6.500" stroke="#6a6a6a" stroke-width="1.400" fill="none"/></svg>
<svg style="left:7px;top:125px" width="16" height="13" viewBox="0 0 16 13"><rect width="16" height="13" fill="#1b1f6b"/><path d="M0 8.500h16" stroke="#fff" stroke-width="1.4"/><path d="M6.500 1v12" stroke="#fff" stroke-width="1.6"/><path d="M6 1.500L1 8M7 1.500l8 4.500M7 3.500l6 4" stroke="#fff" stroke-width=".9" fill="none"/></svg>
<span class="t" style="left:28px;top:124px;font-size:12px;line-height:17px;color:#000;letter-spacing:-1.277px;">RSTAB</span>
<div style="position:absolute;left:15px;top:140px;width:1px;height:7px;background-image:linear-gradient(#8a8a8a 50%,transparent 50%);background-size:1px 2px;"></div>
<svg style="left:11px;top:147px" width="9" height="9" viewBox="0 0 9 9"><rect x=".5" y=".5" width="8" height="8" rx="1" fill="#fdfdfd" stroke="#8f959f"/><path d="M2.5 4.5h4" stroke="#2b3f8f" stroke-width="1"/></svg>
<div style="position:absolute;left:21px;top:151px;width:6px;height:1px;background-image:linear-gradient(90deg,#8a8a8a 50%,transparent 50%);background-size:2px 1px;"></div>
<svg style="left:27px;top:142px" width="16" height="16" viewBox="0 0 16 16"><path d="M3.500 .500h8l3.500 3.500v11.500h-11.500z" fill="#f0f0f0" stroke="#8c8c8c"/><path d="M11.500 .500v3.500h3.500" fill="#fff" stroke="#8c8c8c" stroke-width=".8"/><path d="M9 6.500h4.500M9 8.500h4.500M5 10.500h8.500M5 12.500h8.500" stroke="#a4a4a4"/><path d="M.500 3.300h8.500M.500 6h8.500M.500 8.700h8.500M2 2.500v8M7.500 2.500v8" stroke="#6ca4e0" stroke-width="1.500"/><path d="M.500 11.500l1.500-2l1.500 2zM6 11.500l1.500-2l1.500 2z" fill="#3c9c4c"/></svg>
<span class="t" style="left:47px;top:142px;font-size:12px;line-height:17px;color:#000;font-weight:bold;letter-spacing:0.146px;">004606-model-file [ritual]</span>
<div style="position:absolute;left:34px;top:159px;width:1px;height:136px;background-image:linear-gradient(#8a8a8a 50%,transparent 50%);background-size:1px 2px;"></div>
<svg style="left:30px;top:165px" width="9" height="9" viewBox="0 0 9 9"><rect x=".5" y=".5" width="8" height="8" rx="1" fill="#fdfdfd" stroke="#8f959f"/><path d="M2.5 4.5h4" stroke="#2b3f8f" stroke-width="1"/><path d="M4.5 2.5v4" stroke="#2b3f8f" stroke-width="1"/></svg>
<div style="position:absolute;left:40px;top:169px;width:5px;height:1px;background-image:linear-gradient(90deg,#8a8a8a 50%,transparent 50%);background-size:2px 1px;"></div>
<svg style="left:46px;top:161px" width="16" height="14" viewBox="0 0 16 14"><defs><linearGradient id="fg" x1="0" y1="0" x2="1" y2="1"><stop offset="0" stop-color="#fdf3a6"/><stop offset="1" stop-color="#e6c23e"/></linearGradient></defs><path d="M1 2.2q0-.9.9-.9h3.6l1.2 1.4h6.8q.9 0 .9.9v7.8q0 .9-.9.9H1.900q-.9 0-.9-.9z" fill="url(#fg)" stroke="#a98a2c" stroke-width=".9"/><path d="M1.5 12.6h12.6" stroke="#6d5a1e" stroke-width="1" opacity=".7"/></svg>
<span class="t" style="left:66px;top:160px;font-size:12px;line-height:17px;color:#000;letter-spacing:-0.003px;">Dados do modelo</span>
<svg style="left:30px;top:183px" width="9" height="9" viewBox="0 0 9 9"><rect x=".5" y=".5" width="8" height="8" rx="1" fill="#fdfdfd" stroke="#8f959f"/><path d="M2.5 4.5h4" stroke="#2b3f8f" stroke-width="1"/><path d="M4.5 2.5v4" stroke="#2b3f8f" stroke-width="1"/></svg>
<div style="position:absolute;left:40px;top:187px;width:5px;height:1px;background-image:linear-gradient(90deg,#8a8a8a 50%,transparent 50%);background-size:2px 1px;"></div>
<svg style="left:46px;top:179px" width="16" height="14" viewBox="0 0 16 14"><defs><linearGradient id="fg" x1="0" y1="0" x2="1" y2="1"><stop offset="0" stop-color="#fdf3a6"/><stop offset="1" stop-color="#e6c23e"/></linearGradient></defs><path d="M1 2.2q0-.9.9-.9h3.6l1.2 1.4h6.8q.9 0 .9.9v7.8q0 .9-.9.9H1.900q-.9 0-.9-.9z" fill="url(#fg)" stroke="#a98a2c" stroke-width=".9"/><path d="M1.5 12.6h12.6" stroke="#6d5a1e" stroke-width="1" opacity=".7"/></svg>
<span class="t" style="left:66px;top:178px;font-size:12px;line-height:17px;color:#000;letter-spacing:-0.278px;">Casos e combinações de cargass</span>
<div style="position:absolute;left:35px;top:205px;width:10px;height:1px;background-image:linear-gradient(90deg,#8a8a8a 50%,transparent 50%);background-size:2px 1px;"></div>
<svg style="left:46px;top:197px" width="16" height="14" viewBox="0 0 16 14"><defs><linearGradient id="fg" x1="0" y1="0" x2="1" y2="1"><stop offset="0" stop-color="#fdf3a6"/><stop offset="1" stop-color="#e6c23e"/></linearGradient></defs><path d="M1 2.2q0-.9.9-.9h3.6l1.2 1.4h6.8q.9 0 .9.9v7.8q0 .9-.9.9H1.900q-.9 0-.9-.9z" fill="url(#fg)" stroke="#a98a2c" stroke-width=".9"/><path d="M1.5 12.6h12.6" stroke="#6d5a1e" stroke-width="1" opacity=".7"/></svg>
<span class="t" style="left:66px;top:196px;font-size:12px;line-height:17px;color:#000;letter-spacing:-0.537px;">Cargas</span>
<div style="position:absolute;left:35px;top:223px;width:10px;height:1px;background-image:linear-gradient(90deg,#8a8a8a 50%,transparent 50%);background-size:2px 1px;"></div>
<svg style="left:46px;top:215px" width="16" height="14" viewBox="0 0 16 14"><defs><linearGradient id="fg" x1="0" y1="0" x2="1" y2="1"><stop offset="0" stop-color="#fdf3a6"/><stop offset="1" stop-color="#e6c23e"/></linearGradient></defs><path d="M1 2.2q0-.9.9-.9h3.6l1.2 1.4h6.8q.9 0 .9.9v7.8q0 .9-.9.9H1.900q-.9 0-.9-.9z" fill="url(#fg)" stroke="#a98a2c" stroke-width=".9"/><path d="M1.5 12.6h12.6" stroke="#6d5a1e" stroke-width="1" opacity=".7"/></svg>
<span class="t" style="left:66px;top:214px;font-size:12px;line-height:17px;color:#000;letter-spacing:-0.337px;">Resultados</span>
<svg style="left:30px;top:237px" width="9" height="9" viewBox="0 0 9 9"><rect x=".5" y=".5" width="8" height="8" rx="1" fill="#fdfdfd" stroke="#8f959f"/><path d="M2.5 4.5h4" stroke="#2b3f8f" stroke-width="1"/><path d="M4.5 2.5v4" stroke="#2b3f8f" stroke-width="1"/></svg>
<div style="position:absolute;left:40px;top:241px;width:5px;height:1px;background-image:linear-gradient(90deg,#8a8a8a 50%,transparent 50%);background-size:2px 1px;"></div>
<svg style="left:46px;top:233px" width="16" height="14" viewBox="0 0 16 14"><defs><linearGradient id="fg" x1="0" y1="0" x2="1" y2="1"><stop offset="0" stop-color="#fdf3a6"/><stop offset="1" stop-color="#e6c23e"/></linearGradient></defs><path d="M1 2.2q0-.9.9-.9h3.6l1.2 1.4h6.8q.9 0 .9.9v7.8q0 .9-.9.9H1.900q-.9 0-.9-.9z" fill="url(#fg)" stroke="#a98a2c" stroke-width=".9"/><path d="M1.5 12.6h12.6" stroke="#6d5a1e" stroke-width="1" opacity=".7"/></svg>
<span class="t" style="left:66px;top:232px;font-size:12px;line-height:17px;color:#000;letter-spacing:-0.200px;">Relatórios de impressão</span>
<svg style="left:30px;top:255px" width="9" height="9" viewBox="0 0 9 9"><rect x=".5" y=".5" width="8" height="8" rx="1" fill="#fdfdfd" stroke="#8f959f"/><path d="M2.5 4.5h4" stroke="#2b3f8f" stroke-width="1"/><path d="M4.5 2.5v4" stroke="#2b3f8f" stroke-width="1"/></svg>
<div style="position:absolute;left:40px;top:259px;width:5px;height:1px;background-image:linear-gradient(90deg,#8a8a8a 50%,transparent 50%);background-size:2px 1px;"></div>
<svg style="left:46px;top:251px" width="16" height="14" viewBox="0 0 16 14"><defs><linearGradient id="fg" x1="0" y1="0" x2="1" y2="1"><stop offset="0" stop-color="#fdf3a6"/><stop offset="1" stop-color="#e6c23e"/></linearGradient></defs><path d="M1 2.2q0-.9.9-.9h3.6l1.2 1.4h6.8q.9 0 .9.9v7.8q0 .9-.9.9H1.900q-.9 0-.9-.9z" fill="url(#fg)" stroke="#a98a2c" stroke-width=".9"/><path d="M1.5 12.6h12.6" stroke="#6d5a1e" stroke-width="1" opacity=".7"/></svg>
<span class="t" style="left:66px;top:250px;font-size:12px;line-height:17px;color:#000;letter-spacing:-0.140px;">Objetos auxiliares</span>
<svg style="left:30px;top:273px" width="9" height="9" viewBox="0 0 9 9"><rect x=".5" y=".5" width="8" height="8" rx="1" fill="#fdfdfd" stroke="#8f959f"/><path d="M2.5 4.5h4" stroke="#2b3f8f" stroke-width="1"/><path d="M4.5 2.5v4" stroke="#2b3f8f" stroke-width="1"/></svg>
<div style="position:absolute;left:40px;top:277px;width:5px;height:1px;background-image:linear-gradient(90deg,#8a8a8a 50%,transparent 50%);background-size:2px 1px;"></div>
<svg style="left:46px;top:269px" width="16" height="14" viewBox="0 0 16 14"><defs><linearGradient id="fg" x1="0" y1="0" x2="1" y2="1"><stop offset="0" stop-color="#fdf3a6"/><stop offset="1" stop-color="#e6c23e"/></linearGradient></defs><path d="M1 2.2q0-.9.9-.9h3.6l1.2 1.4h6.8q.9 0 .9.9v7.8q0 .9-.9.9H1.900q-.9 0-.9-.9z" fill="url(#fg)" stroke="#a98a2c" stroke-width=".9"/><path d="M1.5 12.6h12.6" stroke="#6d5a1e" stroke-width="1" opacity=".7"/></svg>
<span class="t" style="left:66px;top:268px;font-size:12px;line-height:17px;color:#000;letter-spacing:0.055px;">Módulos adicionais</span>
<svg style="left:30px;top:291px" width="9" height="9" viewBox="0 0 9 9"><rect x=".5" y=".5" width="8" height="8" rx="1" fill="#fdfdfd" stroke="#8f959f"/><path d="M2.5 4.5h4" stroke="#2b3f8f" stroke-width="1"/></svg>
<div style="position:absolute;left:40px;top:295px;width:5px;height:1px;background-image:linear-gradient(90deg,#8a8a8a 50%,transparent 50%);background-size:2px 1px;"></div>
<svg style="left:45px;top:287px" width="17" height="14" viewBox="0 0 17 14"><path d="M4.500 1.800q0-.8.800-.8h4l1.200 1.500h4.500q.8 0 .8.800v7.700h-11.300z" fill="#d4b83c" stroke="#8c7420" stroke-width=".8"/><path d="M.600 4.200h12l3.200 7.600q.2.800-.800.800h-11.500z" fill="#f0d850" stroke="#84701c" stroke-width=".8"/><path d="M1.800 5h10.200l.400 1h-10.200z" fill="#fcf0a0" opacity=".8"/><path d="M3.600 12.900h12" stroke="#50440c" stroke-width="1" opacity=".7"/></svg>
<span class="t" style="left:66px;top:286px;font-size:12px;line-height:17px;color:#000;letter-spacing:-0.021px;">Programas autónomos</span>
<div style="position:absolute;left:53px;top:303px;width:1px;height:42px;background-image:linear-gradient(#8a8a8a 50%,transparent 50%);background-size:1px 2px;"></div>
<div style="position:absolute;left:54px;top:313px;width:9px;height:1px;background-image:linear-gradient(90deg,#8a8a8a 50%,transparent 50%);background-size:2px 1px;"></div>
<div style="position:absolute;left:54px;top:331px;width:9px;height:1px;background-image:linear-gradient(90deg,#8a8a8a 50%,transparent 50%);background-size:2px 1px;"></div>
<svg style="left:64px;top:305px" width="15" height="15" viewBox="0 0 15 15"><rect x="1" y="1" width="13" height="13" fill="#fdfdfd" stroke="#ecbc90" stroke-width="2"/><path d="M3.500 4h4l4.500-1.500v1.800l-3 1v4.700l-2 1.500h-1.700v-6h-1.800z" fill="#d8dce4" stroke="#8c94a4" stroke-width=".5"/><path d="M3.500 4h5v1.700h-1.700v5.800h-1.600v-5.800h-1.700z" fill="#4c64b4"/></svg>
<span class="t" style="left:85px;top:304px;font-size:12px;line-height:17px;color:#000;letter-spacing:-0.209px;">SHAPE-THIN 9 - Dimensionamento de</span>
<svg style="left:64px;top:323px" width="15" height="15" viewBox="0 0 15 15"><rect x="1" y="1" width="13" height="13" fill="#fdfdfd" stroke="#8c8cf8" stroke-width="2"/><path d="M7.500 2.500v3" stroke="#5c7cc4" stroke-width="1.400"/><path d="M5 8l1-2.500h3l1 2.500z" fill="#4c4c54"/><path d="M3 8.800h9" stroke="#7cacec" stroke-width="1.600"/><path d="M3 12l1.500-2.300l1.500 2.300zM9 12l1.500-2.300l1.500 2.300z" fill="#38b050"/></svg>
<span class="t" style="left:85px;top:322px;font-size:12px;line-height:17px;color:#000;letter-spacing:-0.025px;">CRANEWAY 8 - Dimensionamento de</span>
<svg style="left:49px;top:345px" width="9" height="9" viewBox="0 0 9 9"><rect x=".5" y=".5" width="8" height="8" rx="1" fill="#fdfdfd" stroke="#8f959f"/><path d="M2.5 4.5h4" stroke="#2b3f8f" stroke-width="1"/><path d="M4.5 2.5v4" stroke="#2b3f8f" stroke-width="1"/></svg>
<div style="position:absolute;left:59px;top:349px;width:6px;height:1px;background-image:linear-gradient(90deg,#8a8a8a 50%,transparent 50%);background-size:2px 1px;"></div>
<svg style="left:65px;top:341px" width="16" height="14" viewBox="0 0 16 14"><defs><linearGradient id="fg" x1="0" y1="0" x2="1" y2="1"><stop offset="0" stop-color="#fdf3a6"/><stop offset="1" stop-color="#e6c23e"/></linearGradient></defs><path d="M1 2.2q0-.9.9-.9h3.6l1.2 1.4h6.8q.9 0 .9.9v7.8q0 .9-.9.9H1.900q-.9 0-.9-.9z" fill="url(#fg)" stroke="#a98a2c" stroke-width=".9"/><path d="M1.5 12.6h12.6" stroke="#6d5a1e" stroke-width="1" opacity=".7"/></svg>
<span class="t" style="left:85px;top:340px;font-size:12px;line-height:17px;color:#000;letter-spacing:0.081px;">Demo de módulos autónomos</span>
<svg style="left:1170px;top:190px" width="60" height="440" viewBox="1170 190 60 440"><path d="M1187 217L1230 235.400M1177 237.800L1230 225.800M1196.800 479L1230 529M1177 531.300L1230 535.300" stroke="#7474e0" stroke-width="1" fill="none"/><path d="M1177 276.5L1230 253.7L1230 258.7L1177 281.5z" fill="#8686ee"/><path d="M1177 276.5L1230 253.7" stroke="#3c3c9c" stroke-width=".9" fill="none"/><path d="M1177 342.9L1221 322.7L1221 327.2L1177 347.4z" fill="#8686ee"/><path d="M1177 342.9L1221 322.7" stroke="#3c3c9c" stroke-width=".9" fill="none"/><path d="M1177 484.5L1230 461.7L1230 466.7L1177 489.5z" fill="#8686ee"/><path d="M1177 484.5L1230 461.7" stroke="#3c3c9c" stroke-width=".9" fill="none"/><rect x="1177" y="213" width="11" height="235" fill="#7a7aea"/><rect x="1177" y="213" width="4" height="235" fill="#6a6ada" opacity=".55"/><path d="M1185 206.6L1230 202.7L1230 214.4L1185 217.3z" fill="#7a7aea"/><path d="M1185 217.0L1230 214.1" stroke="#4a4ab4" stroke-width=".8" fill="none"/><path d="M1185 205.5L1230 201.6M1185 218.4L1230 215.5" stroke="#54544c" stroke-width="2.200" stroke-dasharray=".9 1.200" fill="none" opacity=".8"/><path d="M1177 243.9L1230 240.3L1230 252.7L1177 257z" fill="#7a7aea"/><path d="M1177 256.7L1230 252.39999999999998" stroke="#4a4ab4" stroke-width=".8" fill="none"/><path d="M1177 242.8L1230 239.20000000000002M1177 258.1L1230 253.79999999999998" stroke="#54544c" stroke-width="2.200" stroke-dasharray=".9 1.200" fill="none" opacity=".8"/><path d="M1177 280.6L1230 277.5L1230 292.3L1177 295.4z" fill="#7a7aea"/><path d="M1177 295.09999999999997L1230 292.0" stroke="#4a4ab4" stroke-width=".8" fill="none"/><path d="M1177 279.5L1230 276.4M1177 296.5L1230 293.40000000000003" stroke="#54544c" stroke-width="2.200" stroke-dasharray=".9 1.200" fill="none" opacity=".8"/><path d="M1177 318.7L1230 316L1230 333L1177 334.9z" fill="#7a7aea"/><path d="M1177 334.59999999999997L1230 332.7" stroke="#4a4ab4" stroke-width=".8" fill="none"/><path d="M1177 317.59999999999997L1230 314.9M1177 336.0L1230 334.1" stroke="#54544c" stroke-width="2.200" stroke-dasharray=".9 1.200" fill="none" opacity=".8"/><path d="M1177 381L1230 400.5L1230 416.6L1177 396.5z" fill="#7a7aea"/><path d="M1177 396.2L1230 416.3" stroke="#4a4ab4" stroke-width=".8" fill="none"/><path d="M1177 379.9L1230 399.4M1177 397.6L1230 417.70000000000005" stroke="#54544c" stroke-width="2.200" stroke-dasharray=".9 1.200" fill="none" opacity=".8"/><path d="M1177 465L1230 485L1230 500L1177 482z" fill="#7a7aea"/><path d="M1177 481.7L1230 499.7" stroke="#4a4ab4" stroke-width=".8" fill="none"/><path d="M1177 463.9L1230 483.9M1177 483.1L1230 501.1" stroke="#54544c" stroke-width="2.200" stroke-dasharray=".9 1.200" fill="none" opacity=".8"/><path d="M1177 549L1230 569L1230 582.5L1177 562.5z" fill="#7a7aea"/><path d="M1177 562.2L1230 582.2" stroke="#4a4ab4" stroke-width=".8" fill="none"/><path d="M1177 547.9L1230 567.9M1177 563.6L1230 583.6" stroke="#54544c" stroke-width="2.200" stroke-dasharray=".9 1.200" fill="none" opacity=".8"/><path d="M1223.500 316v14" stroke="#e8d0e0" stroke-width="1.500" stroke-dasharray="1.500 1.500"/><path d="M1223.500 317l1.500 2M1223.500 329l1.500-2" stroke="#c03050" stroke-width="1"/><path d="M1177 214.500h10" stroke="#111" stroke-width="1.600"/><path d="M1177 213l2 1.500" stroke="#a01020" stroke-width="1.500"/><path d="M1177 447.700L1205 452.400" stroke="#f01010" stroke-width="1.800"/><path d="M1202.500 448.500L1212.500 453.300L1202.500 456.200z" fill="#a80c0c"/><path d="M1177 449.500h4l9 11.500l-13 5z" fill="#48e048"/><path d="M1181 452l8 9l-9 3z" fill="#a8f0a8" opacity=".7"/><path d="M1177 478l3.500 0l-2 8l-1.500 0z" fill="#101070"/><text x="1218.200" y="459.500" font-family="Liberation Sans, sans-serif" font-size="10.500" fill="#f01010">X</text><text x="1176.500" y="500.800" font-family="Liberation Sans, sans-serif" font-size="9.500" font-weight="bold" fill="#2020c8">Z</text></svg>
<div style="position:absolute;left:276px;top:163px;width:902px;height:731px;background:#f0f0f0;border:1px solid #989898;box-sizing:border-box;box-shadow:0 3px 12px 0 rgba(0,0,0,.34),0 0 2px rgba(0,0,0,.25);"></div>
<div style="position:absolute;left:277px;top:164px;width:900px;height:25px;background:#fff;"></div>
<span class="t" style="left:280px;top:168px;font-size:12px;line-height:17px;color:#999;letter-spacing:-0.159px;">Seleção do relatório de impressão</span>
<svg style="left:1156.500px;top:170.500px" width="11" height="11" viewBox="0 0 11 11"><path d="M.500.500l10 10M10.500.500l-10 10" stroke="#8a8a8a" stroke-width="1"/></svg>
<div style="position:absolute;left:285px;top:197px;width:165px;height:16px;background:#dce6f4;clip-path:polygon(0 0,155px 0,165px 10px,165px 16px,0 16px);"></div>
<div style="position:absolute;left:449px;top:207px;width:1px;height:6px;background:#a0a0f0;"></div>
<span class="t" style="left:287px;top:198px;font-size:11px;line-height:15px;color:#1e3a78;letter-spacing:-0.473px;">Programa</span>
<div style="position:absolute;left:285px;top:213px;width:165px;height:519px;background:#fff;border-top:1px solid #828790;border-left:1px solid #828790;border-right:1px solid #a0a0f0;border-bottom:1px solid #a0a0f0;box-sizing:border-box;"></div>
<div style="position:absolute;left:289px;top:214px;width:40px;height:16px;background:#e4e4e4;border:1px dotted #000;box-sizing:border-box;"></div>
<span class="t" style="left:291px;top:215px;font-size:11px;line-height:14px;color:#000;letter-spacing:-0.219px;">RSTAB</span>
<div style="position:absolute;left:285px;top:742px;width:165px;height:16px;background:#dce6f4;clip-path:polygon(0 0,155px 0,165px 10px,165px 16px,0 16px);"></div>
<div style="position:absolute;left:449px;top:752px;width:1px;height:6px;background:#a0a0f0;"></div>
<span class="t" style="left:287px;top:743px;font-size:11px;line-height:15px;color:#1e3a78;letter-spacing:0.120px;">Mostrar</span>
<div style="position:absolute;left:285px;top:758px;width:165px;height:84px;background:#f0f4f9;border-right:1px solid #a0a0f0;border-bottom:1px solid #a0a0f0;box-sizing:border-box;"></div>
<div class="cb" style="left:288px;top:765px;border-color:#333;"></div>
<span class="t" style="left:304px;top:764px;font-size:11px;line-height:15px;color:#000;letter-spacing:-0.131px;">Folha da capa...</span>
<div class="cb" style="left:288px;top:785px;border-color:#333;"></div>
<span class="t" style="left:304px;top:784px;font-size:11px;line-height:15px;color:#000;letter-spacing:-0.281px;">Conteúdos</span>
<div class="cb" style="left:288px;top:804px;border-color:#333;"><svg style="left:0;top:0" width="11" height="11" viewBox="0 0 11 11"><path d="M1.500 5.500L4.300 8.300L9.600 2.200" fill="none" stroke="#1c1c1c" stroke-width="1.1"/></svg></div>
<span class="t" style="left:304px;top:803px;font-size:11px;line-height:15px;color:#000;letter-spacing:-0.263px;">Informação das imagens</span>
<div class="cb" style="left:288px;top:825px;border-color:#333;"><svg style="left:0;top:0" width="11" height="11" viewBox="0 0 11 11"><path d="M1.500 5.500L4.300 8.300L9.600 2.200" fill="none" stroke="#1c1c1c" stroke-width="1.1"/></svg></div>
<span class="t" style="left:304px;top:824px;font-size:11px;line-height:15px;color:#000;letter-spacing:-0.223px;">Títulos em maiúsculas</span>
<div style="position:absolute;left:285px;top:850px;width:885px;height:1px;background:#a0a0a0;"></div>
<div style="position:absolute;left:285px;top:851px;width:885px;height:1px;background:#fff;"></div>
<div class="btn" style="left:286px;top:863px;width:25px;height:21px;"></div>
<svg style="left:288.3px;top:864.5px" width="18" height="17" viewBox="0 0 18 17"><defs><radialGradient id="hg" cx=".42" cy=".4" r=".62"><stop offset="0" stop-color="#ffffff"/><stop offset=".6" stop-color="#f4f4f6"/><stop offset="1" stop-color="#b4b4bc"/></radialGradient></defs><path d="M4.500 11.500L3 16L9 13z" fill="#f4f4f6" stroke="#8c8c90" stroke-width=".7"/><ellipse cx="9.500" cy="7.800" rx="7.200" ry="6.300" fill="url(#hg)" stroke="#8c8c90" stroke-width=".9"/><path d="M5 11.800L4.200 14.300L7.800 12.800z" fill="#f8f8fa"/><text x="6" y="12.300" font-family="Liberation Serif, serif" font-size="13.500" font-weight="bold" font-style="italic" fill="#3048a8">?</text></svg>
<div class="btn" style="left:1013px;top:863px;width:73px;height:21px;"></div>
<span class="t" style="left:1042.0px;top:866.5px;font-size:11px;line-height:15px;color:#000;letter-spacing:-0.906px;">OK</span>
<div class="btn" style="left:1096px;top:863px;width:73px;height:21px;"></div>
<span class="t" style="left:1111.75px;top:866.5px;font-size:11px;line-height:15px;color:#000;letter-spacing:-0.362px;">Cancelar</span>
<div style="position:absolute;left:459px;top:200px;width:81px;height:19px;background:#f0f0f0;border:1px solid #d9d9d9;border-bottom:none;box-sizing:border-box;"></div>
<span class="t" style="left:465px;top:203px;font-size:11px;line-height:15px;color:#000;letter-spacing:-0.248px;">Seleção global</span>
<div style="position:absolute;left:457px;top:218px;width:711px;height:624px;background:#f0f0f0;border:1px solid #d4d4d4;box-shadow:inset 0 0 0 1px #fff;box-sizing:border-box;"></div>
<div style="position:absolute;left:539px;top:198px;width:100px;height:22px;background:#fff;border:1px solid #d9d9d9;border-bottom:none;box-sizing:border-box;"></div>
<span class="t" style="left:547px;top:201px;font-size:11px;line-height:15px;color:#000;letter-spacing:-0.306px;">Dados do modelo</span>
<div style="position:absolute;left:464px;top:225px;width:698px;height:16px;background:#dce6f4;clip-path:polygon(0 0,688px 0,698px 10px,698px 16px,0 16px);"></div>
<div style="position:absolute;left:1161px;top:235px;width:1px;height:6px;background:#a0a0f0;"></div>
<span class="t" style="left:466px;top:226px;font-size:11px;line-height:15px;color:#1e3a78;letter-spacing:-0.092px;">Tabelas a mostrar</span>
<div style="position:absolute;left:464px;top:241px;width:698px;height:595px;background:#f0f4f9;border-right:1px solid #a0a0f0;border-bottom:1px solid #a0a0f0;box-sizing:border-box;"></div>
<div style="position:absolute;left:464px;top:241px;width:697px;height:565px;background:#fff;"></div>
<div style="position:absolute;left:464px;top:241px;width:695px;height:565px;background:#e8eeed;"></div>
<div style="position:absolute;left:464px;top:241px;width:695px;height:210px;background:#f0f0f0;"></div>
<div style="position:absolute;left:464px;top:241px;width:695px;height:18px;background:#f0f0f0;border:1px solid #a0a0a0;border-right:none;box-sizing:border-box;"></div>
<div style="position:absolute;left:465px;top:259px;width:347px;height:15px;background:#fff;"></div>
<div style="position:absolute;left:465px;top:291px;width:694px;height:15px;background:#dcdcdc;"></div>
<div style="position:absolute;left:464px;top:274px;width:695px;height:1px;background:#a0a0a0;"></div>
<div style="position:absolute;left:464px;top:290px;width:695px;height:1px;background:#a0a0a0;"></div>
<div style="position:absolute;left:464px;top:306px;width:695px;height:1px;background:#a0a0a0;"></div>
<div style="position:absolute;left:464px;top:322px;width:695px;height:1px;background:#a0a0a0;"></div>
<div style="position:absolute;left:464px;top:338px;width:695px;height:1px;background:#a0a0a0;"></div>
<div style="position:absolute;left:464px;top:354px;width:695px;height:1px;background:#a0a0a0;"></div>
<div style="position:absolute;left:464px;top:370px;width:695px;height:1px;background:#a0a0a0;"></div>
<div style="position:absolute;left:464px;top:386px;width:695px;height:1px;background:#a0a0a0;"></div>
<div style="position:absolute;left:464px;top:402px;width:695px;height:1px;background:#a0a0a0;"></div>
<div style="position:absolute;left:464px;top:418px;width:695px;height:1px;background:#a0a0a0;"></div>
<div style="position:absolute;left:464px;top:434px;width:695px;height:1px;background:#a0a0a0;"></div>
<div style="position:absolute;left:464px;top:450px;width:695px;height:1px;background:#a0a0a0;"></div>
<div style="position:absolute;left:464px;top:241px;width:1px;height:565px;background:#a0a0a0;"></div>
<div style="position:absolute;left:506px;top:241px;width:1px;height:565px;background:#a0a0a0;"></div>
<div style="position:absolute;left:812px;top:241px;width:1px;height:565px;background:#a0a0a0;"></div>
<div style="position:absolute;left:854px;top:241px;width:1px;height:565px;background:#a0a0a0;"></div>
<span class="t" style="left:468px;top:242px;font-size:11px;line-height:15px;color:#000;letter-spacing:-0.380px;">Mostrar</span>
<span class="t" style="left:642px;top:242px;font-size:11px;line-height:15px;color:#000;letter-spacing:0.113px;">Tabela</span>
<span class="t" style="left:821px;top:242px;font-size:11px;line-height:15px;color:#000;letter-spacing:-0.229px;">Tudo</span>
<span class="t" style="left:926px;top:242px;font-size:11px;line-height:15px;color:#000;letter-spacing:-0.254px;">Seleção de números (p. ex. &#x27;1-4,8&#x27;)</span>
<span class="t" style="left:512px;top:260px;font-size:11px;line-height:15px;color:#000;letter-spacing:-0.323px;">1.1 Nós</span>
<span class="t" style="left:860px;top:260px;font-size:11px;line-height:15px;color:#000;letter-spacing:-0.229px;">Tudo</span>
<div style="position:absolute;left:480px;top:261px;width:12px;height:12px;border:1px solid #000;border-right:2px solid #000;border-bottom:2px solid #000;background:#fff;box-sizing:border-box;"></div>
<div style="position:absolute;left:828px;top:261px;width:12px;height:12px;border:1px solid #000;border-right:2px solid #000;border-bottom:2px solid #000;background:#fff;box-sizing:border-box;"><svg style="left:1px;top:1px" width="8" height="8" viewBox="0 0 8 8"><path d="M1 4L3.200 6.500L7 1.200" fill="none" stroke="#000" stroke-width="1.600"/></svg></div>
<div class="btn" style="left:468px;top:811px;width:25px;height:21px;"></div>
<svg style="left:472px;top:814px" width="18" height="15" viewBox="0 0 18 15"><path d="M8.500 1.500v12M8.500 1.500h2M8.500 5.500h2M8.500 9.500h2M8.500 13.500h2" stroke="#4c4c4c" stroke-width=".9" fill="none"/><g fill="#f8f8f8" stroke="#4c4c4c" stroke-width=".8"><rect x="10.500" y=".500" width="4.600" height="2.200"/><rect x="10.500" y="4.400" width="4.600" height="2.200"/><rect x="10.500" y="8.400" width="4.600" height="2.200"/><rect x="10.500" y="12.300" width="4.600" height="2.200"/></g><path d="M1.200 8.200L3.800 11.300L7.800 2.800" fill="none" stroke="#3050c8" stroke-width="2" stroke-linecap="round" stroke-linejoin="round"/><path d="M1.500 8L3.800 10.600L7.500 3" fill="none" stroke="#8ca4f0" stroke-width=".7" stroke-linecap="round"/></svg>
<div class="btn" style="left:498px;top:811px;width:25px;height:21px;"></div>
<svg style="left:502px;top:814px" width="18" height="15" viewBox="0 0 18 15"><path d="M8.500 1.500v12M8.500 1.500h2M8.500 5.500h2M8.500 9.500h2M8.500 13.500h2" stroke="#4c4c4c" stroke-width=".9" fill="none"/><g fill="#f8f8f8" stroke="#4c4c4c" stroke-width=".8"><rect x="10.500" y=".500" width="4.600" height="2.200"/><rect x="10.500" y="4.400" width="4.600" height="2.200"/><rect x="10.500" y="8.400" width="4.600" height="2.200"/><rect x="10.500" y="12.300" width="4.600" height="2.200"/></g><path d="M1 3.500L6.500 9.500M6.500 3.500L1 9.500" fill="none" stroke="#3454c8" stroke-width="1.900"/><path d="M1.300 3.800L6.200 9.200" fill="none" stroke="#90a8f0" stroke-width=".6"/></svg>
<div class="cb" style="left:856px;top:814px;border-color:#333;"><svg style="left:0;top:0" width="11" height="11" viewBox="0 0 11 11"><path d="M1.500 5.500L4.300 8.300L9.600 2.200" fill="none" stroke="#1c1c1c" stroke-width="1.1"/></svg></div>
<span class="t" style="left:872px;top:813px;font-size:11px;line-height:15px;color:#000;letter-spacing:-0.293px;">Mostrar comentários</span>
<div style="position:absolute;left:386px;top:276px;width:688px;height:506px;background:#f0f0f0;border:1px solid #6a6a6a;box-sizing:border-box;box-shadow:0 3px 12px 0 rgba(0,0,0,.34),0 0 2px rgba(0,0,0,.25);"></div>
<div style="position:absolute;left:387px;top:277px;width:686px;height:25px;background:#fff;"></div>
<span class="t" style="left:390px;top:281px;font-size:12px;line-height:17px;color:#000;letter-spacing:-0.172px;">Seleção do relatório de impressão - detalhes da secção</span>
<svg style="left:1052px;top:283px" width="12" height="12" viewBox="0 0 12 12"><path d="M.700.700l10.600 10.600M11.300.700L.700 11.300" stroke="#000" stroke-width="1.100"/></svg>
<div style="position:absolute;left:395px;top:312px;width:670px;height:16px;background:#dce6f4;clip-path:polygon(0 0,660px 0,670px 10px,670px 16px,0 16px);"></div>
<div style="position:absolute;left:1064px;top:322px;width:1px;height:6px;background:#a0a0f0;"></div>
<span class="t" style="left:397px;top:313px;font-size:11px;line-height:15px;color:#1e3a78;letter-spacing:0.016px;">Secções a mostrar</span>
<div style="position:absolute;left:395px;top:328px;width:670px;height:413px;background:#f0f4f9;border-right:1px solid #a0a0f0;border-bottom:1px solid #a0a0f0;box-sizing:border-box;"></div>
<div style="position:absolute;left:395px;top:328px;width:669px;height:375px;background:#fff;border-top:1px solid #828790;border-left:1px solid #828790;box-sizing:border-box;"></div>
<div class="cb" style="left:397px;top:331px;border-color:#333;"><svg style="left:0;top:0" width="11" height="11" viewBox="0 0 11 11"><path d="M1.500 5.500L4.300 8.300L9.600 2.200" fill="none" stroke="#3a3a3a" stroke-width="1.15"/></svg></div>
<span class="t" style="left:412.5px;top:330px;font-size:11px;line-height:14px;color:#000;letter-spacing:-0.173px;">1.3.1 Secções - rotação da secção</span>
<div class="cb" style="left:397px;top:347px;border-color:#333;"><svg style="left:0;top:0" width="11" height="11" viewBox="0 0 11 11"><path d="M1.500 5.500L4.300 8.300L9.600 2.200" fill="none" stroke="#3a3a3a" stroke-width="1.15"/></svg></div>
<span class="t" style="left:412.5px;top:346px;font-size:11px;line-height:14px;color:#000;letter-spacing:-0.155px;">1.3.2 Secções - redução da rigidez</span>
<div class="cb" style="left:397px;top:363px;border-color:#333;"><svg style="left:0;top:0" width="11" height="11" viewBox="0 0 11 11"><path d="M1.500 5.500L4.300 8.300L9.600 2.200" fill="none" stroke="#3a3a3a" stroke-width="1.15"/></svg></div>
<span class="t" style="left:412.5px;top:362px;font-size:11px;line-height:14px;color:#000;letter-spacing:-0.128px;">1.3.3 Redução do momento de inércia de torção</span>
<div class="cb" style="left:397px;top:379px;border-color:#333;"></div>
<span class="t" style="left:412.5px;top:378px;font-size:11px;line-height:14px;color:#000;letter-spacing:-0.124px;">1: IPE 500 | DIN 1025-5:1994; Aço S 235 JR</span>
<div style="position:absolute;left:412px;top:393px;width:651px;height:16px;background:#0078d7;"></div>
<div class="cb" style="left:397px;top:395px;border-color:#333;"><svg style="left:0;top:0" width="11" height="11" viewBox="0 0 11 11"><path d="M1.500 5.500L4.300 8.300L9.600 2.200" fill="none" stroke="#3a3a3a" stroke-width="1.15"/></svg></div>
<span class="t" style="left:412.5px;top:394px;font-size:11px;line-height:14px;color:#fff;letter-spacing:-0.124px;">2: IPE 360 | DIN 1025-5:1994; Aço S 235 JR</span>
<div class="cb" style="left:397px;top:411px;border-color:#333;"></div>
<span class="t" style="left:412.5px;top:410px;font-size:11px;line-height:14px;color:#000;letter-spacing:-0.124px;">3: IPE 450 | DIN 1025-5:1994; Aço S 235 JR</span>
<div style="position:absolute;left:412px;top:425px;width:651px;height:16px;background:#0078d7;"></div>
<div class="cb" style="left:397px;top:427px;border-color:#333;"><svg style="left:0;top:0" width="11" height="11" viewBox="0 0 11 11"><path d="M1.500 5.500L4.300 8.300L9.600 2.200" fill="none" stroke="#3a3a3a" stroke-width="1.15"/></svg></div>
<span class="t" style="left:412.5px;top:426px;font-size:11px;line-height:14px;color:#fff;letter-spacing:-0.115px;">5: HE A 200 | DIN 1025-3:1994; Aço S 235 JR</span>
<div class="cb" style="left:397px;top:443px;border-color:#333;"></div>
<span class="t" style="left:412.5px;top:442px;font-size:11px;line-height:14px;color:#000;letter-spacing:-0.124px;">6: IPE 300 | DIN 1025-5:1994; Aço S 235 JR</span>
<div style="position:absolute;left:412px;top:457px;width:651px;height:16px;background:#0078d7;"></div>
<div class="cb" style="left:397px;top:459px;border-color:#333;"><svg style="left:0;top:0" width="11" height="11" viewBox="0 0 11 11"><path d="M1.500 5.500L4.300 8.300L9.600 2.200" fill="none" stroke="#3a3a3a" stroke-width="1.15"/></svg></div>
<span class="t" style="left:412.5px;top:458px;font-size:11px;line-height:14px;color:#fff;letter-spacing:-0.128px;">7: QRO 80x5 | DIN 59410:1974; Aço S 235 JR</span>
<div style="position:absolute;left:412px;top:473px;width:651px;height:16px;background:#0078d7;"></div>
<div class="cb" style="left:397px;top:475px;border-color:#333;"><svg style="left:0;top:0" width="11" height="11" viewBox="0 0 11 11"><path d="M1.500 5.500L4.300 8.300L9.600 2.200" fill="none" stroke="#3a3a3a" stroke-width="1.15"/></svg></div>
<span class="t" style="left:412.5px;top:474px;font-size:11px;line-height:14px;color:#fff;letter-spacing:-0.163px;">8: RD 24 | DIN 1013-1; Aço S 235 JR</span>
<div style="position:absolute;left:412px;top:409px;width:651px;height:16px;border:1px dotted #000;box-sizing:border-box;"></div>
<div class="btn" style="left:399px;top:714px;width:25px;height:21px;"></div>
<svg style="left:403px;top:717px" width="18" height="15" viewBox="0 0 18 15"><path d="M8.500 1.500v12M8.500 1.500h2M8.500 5.500h2M8.500 9.500h2M8.500 13.500h2" stroke="#4c4c4c" stroke-width=".9" fill="none"/><g fill="#f8f8f8" stroke="#4c4c4c" stroke-width=".8"><rect x="10.500" y=".500" width="4.600" height="2.200"/><rect x="10.500" y="4.400" width="4.600" height="2.200"/><rect x="10.500" y="8.400" width="4.600" height="2.200"/><rect x="10.500" y="12.300" width="4.600" height="2.200"/></g><path d="M1.200 8.200L3.800 11.300L7.800 2.800" fill="none" stroke="#3050c8" stroke-width="2" stroke-linecap="round" stroke-linejoin="round"/><path d="M1.500 8L3.800 10.600L7.500 3" fill="none" stroke="#8ca4f0" stroke-width=".7" stroke-linecap="round"/></svg>
<div class="btn" style="left:429px;top:714px;width:25px;height:21px;"></div>
<svg style="left:433px;top:717px" width="18" height="15" viewBox="0 0 18 15"><path d="M8.500 1.500v12M8.500 1.500h2M8.500 5.500h2M8.500 9.500h2M8.500 13.500h2" stroke="#4c4c4c" stroke-width=".9" fill="none"/><g fill="#f8f8f8" stroke="#4c4c4c" stroke-width=".8"><rect x="10.500" y=".500" width="4.600" height="2.200"/><rect x="10.500" y="4.400" width="4.600" height="2.200"/><rect x="10.500" y="8.400" width="4.600" height="2.200"/><rect x="10.500" y="12.300" width="4.600" height="2.200"/></g><path d="M1 3.500L6.500 9.500M6.500 3.500L1 9.500" fill="none" stroke="#3454c8" stroke-width="1.900"/><path d="M1.300 3.800L6.200 9.200" fill="none" stroke="#90a8f0" stroke-width=".6"/></svg>
<div class="btn" style="left:1035px;top:712px;width:25px;height:21px;"></div>
<svg style="left:1037px;top:713px" width="20" height="18" viewBox="1037 713 20 18"><path d="M1039 714.500h12M1039 716.500h12M1039 718.500h12M1039 720.500h5M1039 722.500h5M1039 724.500h5" stroke="#6c6c6c" stroke-width="1"/><circle cx="1047.300" cy="722.300" r="3.600" fill="#d4d4d8" stroke="#3c5cc4" stroke-width="1.300"/><path d="M1045 722.300h4.600" stroke="#a8a8ac" stroke-width=".8"/><path d="M1050 725l3.600 3.600" stroke="#3454c0" stroke-width="2.200" stroke-linecap="round"/><path d="M1050.300 725.300l3 3" stroke="#c4d4f8" stroke-width=".9" stroke-linecap="round"/></svg>
<div class="btn" style="left:396px;top:752px;width:25px;height:20px;"></div>
<svg style="left:398.3px;top:753.3px" width="18" height="17" viewBox="0 0 18 17"><defs><radialGradient id="hg" cx=".42" cy=".4" r=".62"><stop offset="0" stop-color="#ffffff"/><stop offset=".6" stop-color="#f4f4f6"/><stop offset="1" stop-color="#b4b4bc"/></radialGradient></defs><path d="M4.500 11.500L3 16L9 13z" fill="#f4f4f6" stroke="#8c8c90" stroke-width=".7"/><ellipse cx="9.500" cy="7.800" rx="7.200" ry="6.300" fill="url(#hg)" stroke="#8c8c90" stroke-width=".9"/><path d="M5 11.800L4.200 14.300L7.800 12.800z" fill="#f8f8fa"/><text x="6" y="12.300" font-family="Liberation Serif, serif" font-size="13.500" font-weight="bold" font-style="italic" fill="#3048a8">?</text></svg>
<div class="btn" style="left:910px;top:752px;width:73px;height:21px;border:2px solid #0078d7;"></div>
<span class="t" style="left:939.0px;top:755.5px;font-size:11px;line-height:15px;color:#000;letter-spacing:-0.906px;">OK</span>
<div class="btn" style="left:993px;top:752px;width:73px;height:21px;"></div>
<span class="t" style="left:1008.75px;top:755.5px;font-size:11px;line-height:15px;color:#000;letter-spacing:-0.362px;">Cancelar</span>
</div>
</body></html>
